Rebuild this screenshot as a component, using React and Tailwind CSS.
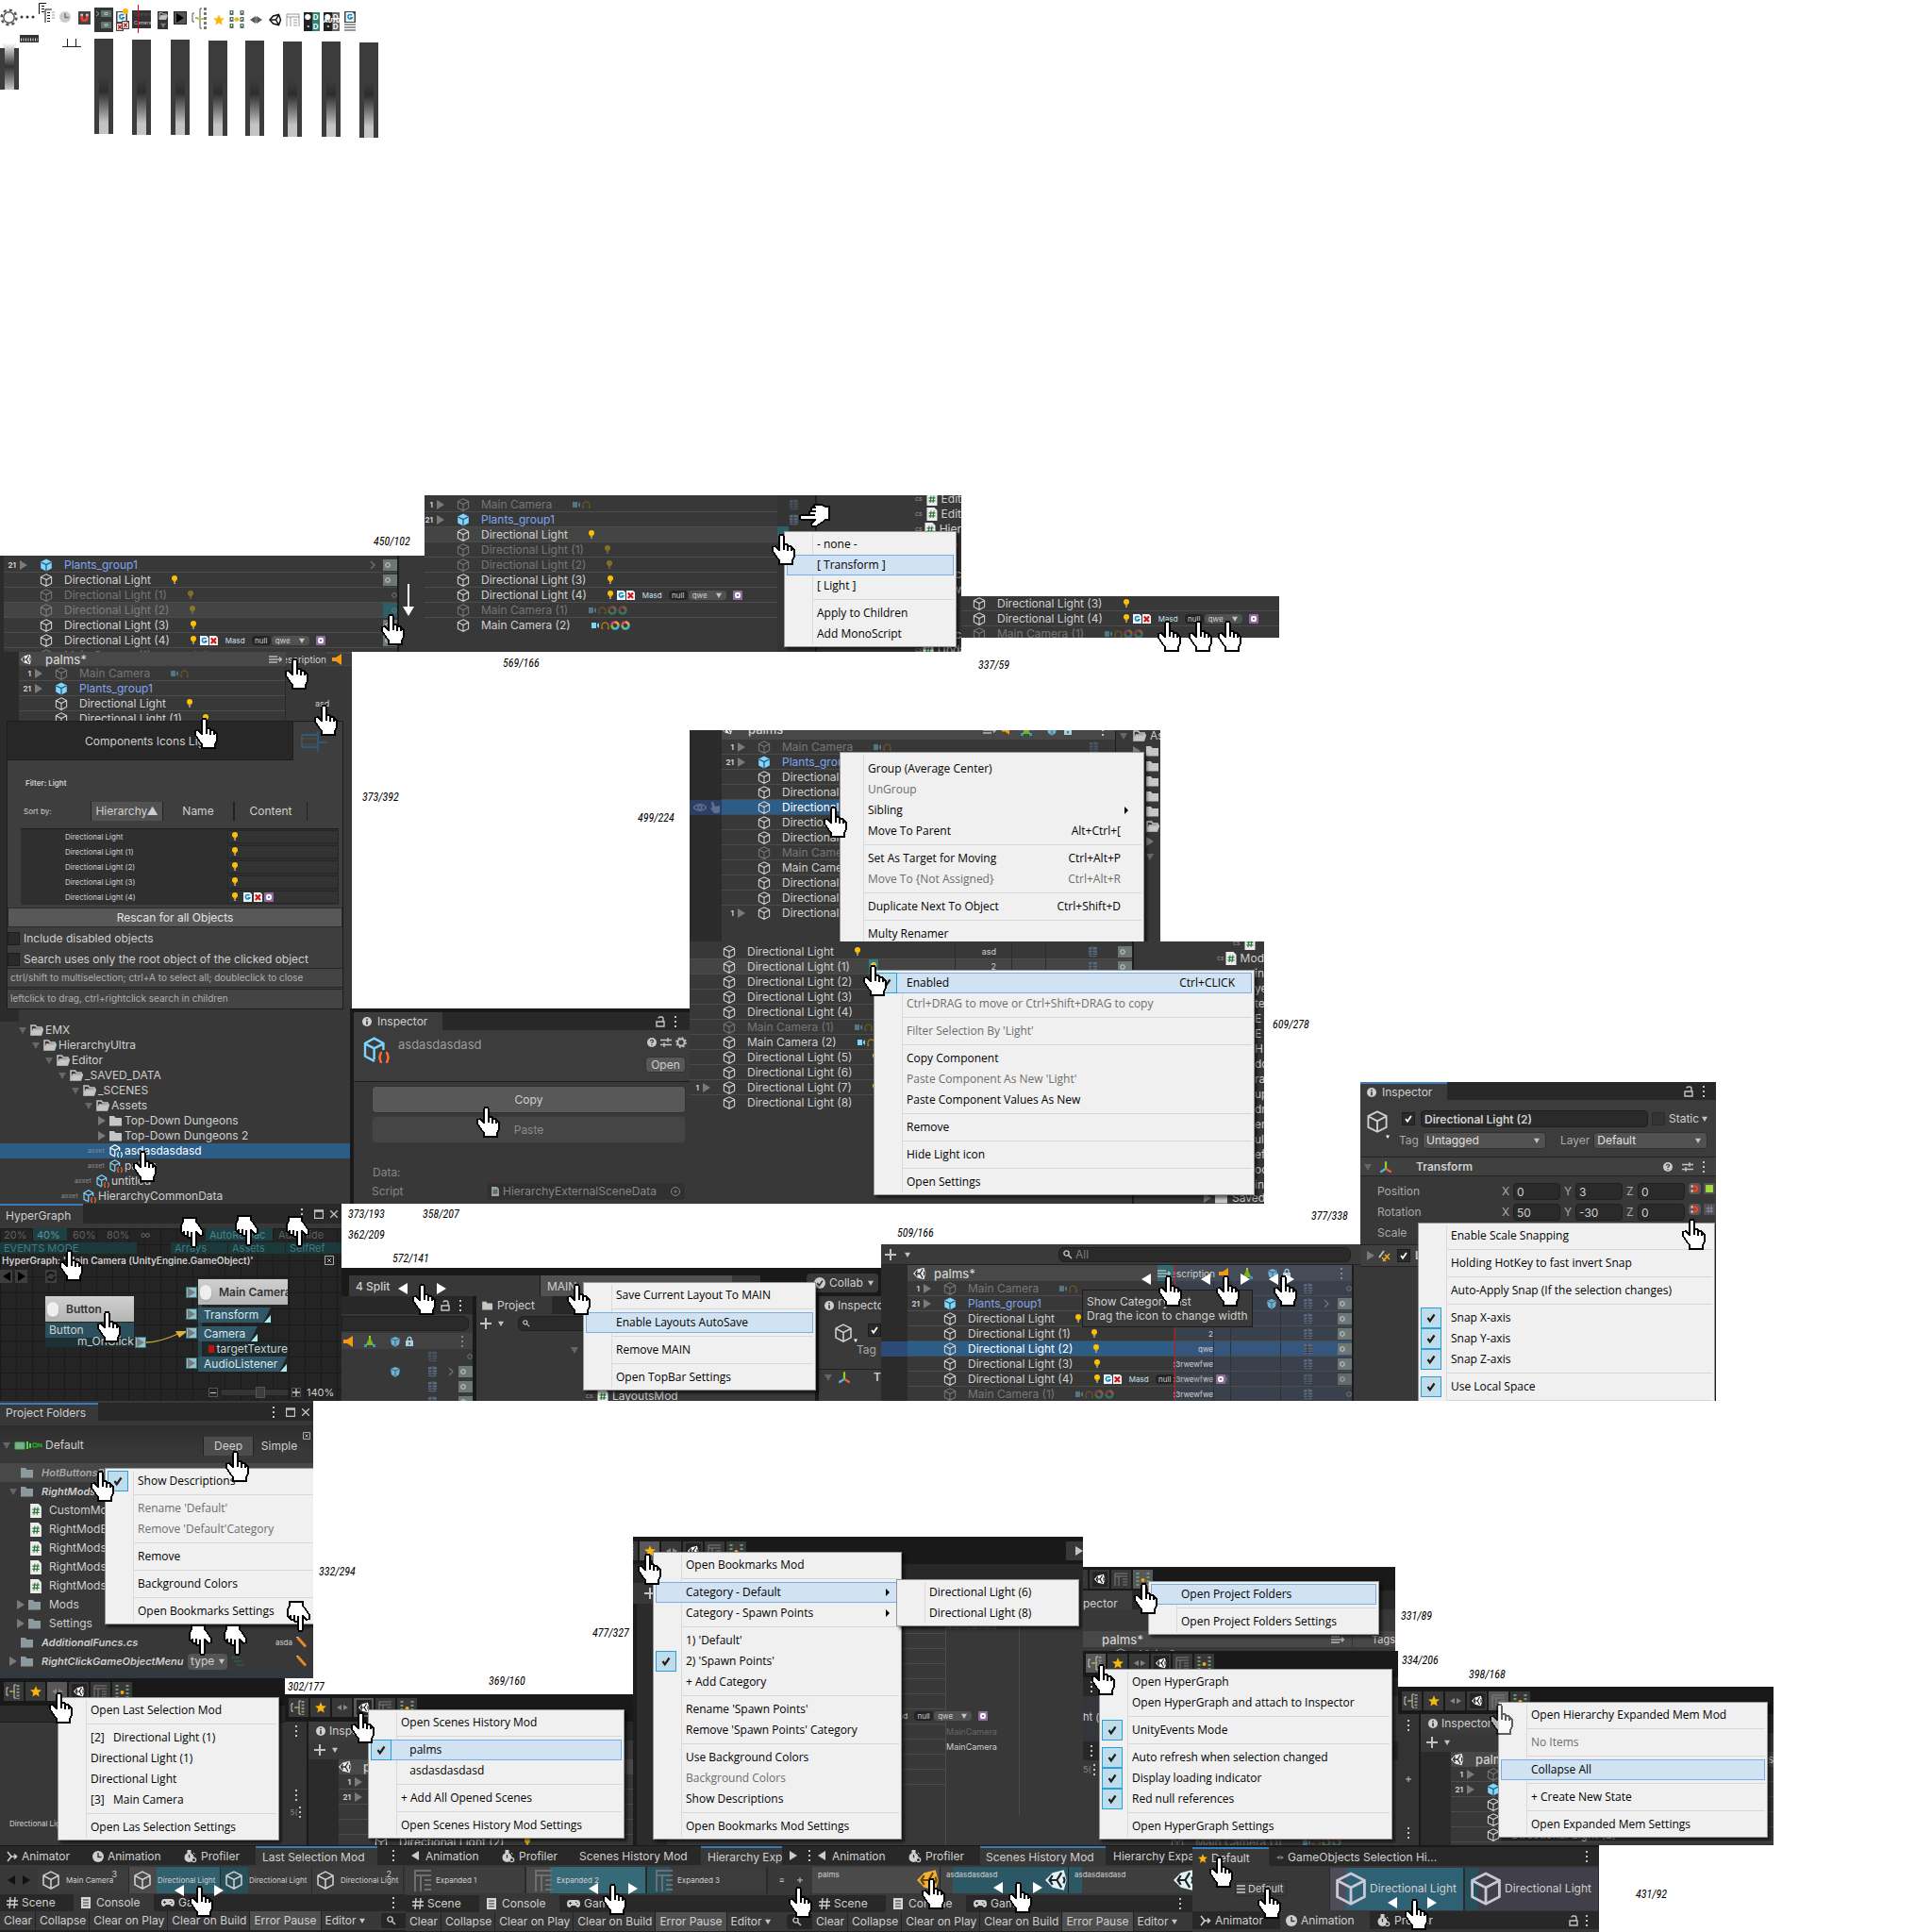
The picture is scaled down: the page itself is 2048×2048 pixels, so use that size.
import React from "react";

/* ---------- glyphs ---------- */

const Cube = ({ c = "h-3.5 w-3.5", solid }) =>
  solid ? (
    <svg viewBox="0 0 14 14" className={`shrink-0 ${c}`}>
      <path d="M7 .6 12.8 3.4V10.6L7 13.6 1.2 10.6V3.4Z" fill="#7fd6fd" />
      <path d="M1.6 4 7 6.6 12.4 4M7 6.6V13.4" fill="none" stroke="#26516b" strokeWidth="1.2" />
    </svg>
  ) : (
    <svg viewBox="0 0 14 14" className={`shrink-0 ${c}`} fill="none" stroke="currentColor" strokeWidth="1.1">
      <path d="M7 .8 12.6 3.6V10.4L7 13.3 1.4 10.4V3.6ZM1.6 3.8 7 6.6 12.4 3.8M7 6.6V13" />
    </svg>
  );

const Tri = ({ c = "" }) => (
  <svg viewBox="0 0 8 10" className={`h-2.5 w-2 shrink-0 fill-[#7a7a7a] ${c}`}>
    <path d="M0 0 8 5 0 10Z" />
  </svg>
);
const TriDown = ({ c = "h-2 w-2 fill-[#666]" }) => (
  <svg viewBox="0 0 8 8" className={`shrink-0 ${c}`}>
    <path d="M0 1H8L4 8Z" />
  </svg>
);
const Dots = ({ c = "" }) => (
  <svg viewBox="0 0 2 12" className={`h-3 w-0.5 shrink-0 fill-[#c4c4c4] ${c}`}>
    <path d="M0 0h2v2H0zM0 5h2v2H0zM0 10h2v2H0z" />
  </svg>
);
const Lock = ({ c = "" }) => (
  <svg viewBox="0 0 10 12" className={`h-3 w-2.5 shrink-0 ${c}`} fill="none" stroke="#c4c4c4" strokeWidth="1.4">
    <path d="M1 6H9V11H1ZM3 2.5Q3 1 5 1H6Q8 1 8 3V6" />
  </svg>
);
const Bulb = ({ c = "" }) => (
  <svg viewBox="0 0 6 10" className={`h-2.5 w-1.5 shrink-0 ${c}`}>
    <circle cx="3" cy="3" r="3" fill="#fbc007" />
    <path d="M1.8 5.5h2.4V7H1.8z" fill="#e2a800" />
    <path d="M2 7.3h2v1.8H2z" fill="#9a9a9a" />
  </svg>
);
const CamPhones = ({ rings }) => (
  <svg viewBox="0 0 42 10" className="h-2.5 w-[42px] shrink-0">
    <path d="M0 2h5v6H0zM6 4l2-2v6L6 6z" fill="#7fd6fd" />
    <path d="M11 9V5.500a3.500 3.500 0 0 1 7 0V9M11.500 7v2M17.500 7v2" fill="none" stroke="#a97a10" strokeWidth="1.4" />
    {rings && (
      <g fill="none" strokeWidth="2.6">
        <path d="M25 1.500a3.500 3.500 0 0 1 3.500 3.500M36 1.500a3.500 3.500 0 0 1 3.500 3.500" stroke="#e8a33a" />
        <path d="M28.500 5a3.500 3.500 0 0 1-3.500 3.500M39.500 5a3.500 3.500 0 0 1-3.500 3.500" stroke="#36b6e0" />
        <path d="M25 8.500a3.500 3.500 0 0 1-3.500-3.500M36 8.500a3.500 3.500 0 0 1-3.500-3.500" stroke="#5cc85c" />
        <path d="M21.500 5a3.500 3.500 0 0 1 3.500-3.500M32.500 5a3.500 3.500 0 0 1 3.500-3.500" stroke="#e5456e" />
      </g>
    )}
  </svg>
);
const PageG = ({ c = "h-2.5 w-[9px]" }) => (
  <svg viewBox="0 0 9 10" className={`shrink-0 ${c}`}>
    <path d="M0 0H7L9 2V10H0Z" fill="#e9f4fb" />
    <path d="M6.500 3.300A2.300 2.300 0 1 0 6.700 5.800H4.800" fill="none" stroke="#1b80b8" strokeWidth="1.5" />
  </svg>
);
const PageX = ({ c = "h-2.5 w-[9px]" }) => (
  <svg viewBox="0 0 9 10" className={`shrink-0 ${c}`}>
    <path d="M0 0H7L9 2V10H0Z" fill="#f4f4f4" />
    <path d="M1.800 2.500 7 8M7 2.500 1.800 8" stroke="#d31414" strokeWidth="2.2" />
  </svg>
);
const Purple = ({ c = "" }) => (
  <svg viewBox="0 0 10 10" className={`h-2.5 w-2.5 shrink-0 ${c}`}>
    <rect width="10" height="10" rx="1" fill="#8d6c9e" />
    <rect x="3" y="3" width="4" height="4" rx="1" fill="none" stroke="#fff" strokeWidth="1.8" />
  </svg>
);
const CsPage = ({ c = "h-3.5 w-[11px]" }) => (
  <svg viewBox="0 0 11 14" className={`shrink-0 ${c}`}>
    <path d="M0 0H8L11 3V14H0Z" fill="#ececec" />
    <path d="M4.500 3.500 3.500 11M7.500 3.500 6.500 11M2 5.800H9M2 8.800H9" stroke="#2c7a3b" strokeWidth="1.2" />
  </svg>
);
const Folder = ({ open, c = "h-3 w-3.5", tint = "#c6c6c6" }) => (
  <svg viewBox="0 0 14 12" className={`shrink-0 ${c}`}>
    {open ? (
      <path d="M1 11V1H5.500L7 3H12V5M1 11 3.500 5H13.500L11.500 11Z" fill="none" stroke={tint} strokeWidth="1.500" />
    ) : (
      <path d="M0 1H5L6.500 3H13V11.500H0Z" fill={tint} />
    )}
    {open && <path d="M1.500 11 3.800 5.500H13L11 11Z" fill={tint} />}
  </svg>
);
const Unity = ({ c = "h-3.5 w-3.5", fill = "#e8e8e8", ink = "#2a2a2a" }) => (
  <svg viewBox="0 0 14 14" className={`shrink-0 ${c}`}>
    <path d="M0 7 4.500 2.500 11.500 .8 13.200 7 11.500 13.200 4.500 11.500Z" fill={fill} />
    <path d="M2.600 7H7.200M7.200 7 10 2.400M7.200 7 10 11.600M4.500 9.800 2.600 7 4.500 4.200M11.300 5 12 7 11.300 9" fill="none" stroke={ink} strokeWidth="1.300" />
  </svg>
);
const Info = ({ c = "h-2.5 w-2.5" }) => (
  <svg viewBox="0 0 10 10" className={`shrink-0 ${c}`}>
    <circle cx="5" cy="5" r="5" fill="#d0d0d0" />
    <path d="M4.200 1.800h1.600v1.500H4.200zM4.200 4.200h1.600v4H4.200z" fill="#333" />
  </svg>
);
const AssetCube = ({ c = "h-3.5 w-3.5", line = "#7fd6fd", brace = "#ff6a3d" }) => (
  <svg viewBox="0 0 14 14" className={`shrink-0 ${c}`} fill="none" strokeWidth="1.200">
    <path d="M6 13 1 10.300V3.500L5.800 .8 10.700 3.500V7M1 3.700 5.800 6.200 10.700 3.700M5.800 6.200V12" stroke={line} />
    <path d="M10 8.500q-1 0-1 1.200t-.8 1.300q.8.100.8 1.300T10 13.500M12 8.500q1 0 1 1.200t.8 1.300q-.8.100-.8 1.300t-1 1.200" stroke={brace} />
  </svg>
);
const Axis = ({ c = "h-3.5 w-3.5" }) => (
  <svg viewBox="0 0 14 14" className={`shrink-0 ${c}`} fill="none" strokeWidth="2.200" strokeLinecap="round">
    <path d="M7 2V8" stroke="#8fd320" />
    <path d="M6 9.500 2 12" stroke="#4bb8ea" />
    <path d="M8 9.500 12 12" stroke="#f0603c" />
  </svg>
);
const Triad = ({ c = "h-3 w-3" }) => (
  <svg viewBox="0 0 12 12" className={`shrink-0 ${c}`}>
    <path d="M6 1 10.500 10H1.500Z" fill="#7fae1f" />
    <path d="M0 9h3v3H0zM9 9h3v3H9z" fill="#2f9fc4" />
    <path d="M5 0h2v3H5z" fill="#9ed32b" />
  </svg>
);
const Horn = ({ c = "h-3 w-2.5" }) => (
  <svg viewBox="0 0 10 12" className={`shrink-0 ${c}`}>
    <path d="M0 4H4L10 0V12L4 8H0Z" fill="#f39a12" />
  </svg>
);
const BlueBox = ({ c = "h-3 w-2.5" }) => (
  <svg viewBox="0 0 10 12" className={`shrink-0 ${c}`}>
    <path d="M5 1 10 3 9 9 5 12 1 9 0 3Z" fill="#6fb1cf" />
    <path d="M0 3 5 5 10 3M5 5V12" stroke="#37647a" fill="none" />
  </svg>
);
const Padlock = ({ c = "h-3 w-2" }) => (
  <svg viewBox="0 0 8 12" className={`shrink-0 ${c}`}>
    <path d="M2 6V3.500a2 2 0 0 1 4 0V6" stroke="#a7cfdc" strokeWidth="1.300" fill="none" />
    <path d="M0 5H8V11H0Z" fill="#a7cfdc" />
    <path d="M3.300 7h1.400v2.500H3.300z" fill="#305060" />
  </svg>
);
const Lines = ({ c = "h-2.5 w-3.5" }) => (
  <svg viewBox="0 0 14 10" className={`shrink-0 ${c}`} fill="none" stroke="#b8b8b8" strokeWidth="1.300">
    <path d="M0 2H9M0 5H13M0 8H9M11 2.500 13.500 5 11 7.500" />
  </svg>
);
const Db = ({ c = "" }) => (
  <svg viewBox="0 0 9 12" className={`h-3 w-[9px] shrink-0 ${c}`}>
    <path d="M0 1.500Q4.500-.5 9 1.500V10.500Q4.500 12.500 0 10.500Z" fill="#5d6b7c" />
    <path d="M0 4H9M0 7H9M0 9.500H9M4 0V12" stroke="#323b45" strokeWidth="1" />
  </svg>
);
const Loupe = ({ c = "h-2.5 w-2.5" }) => (
  <svg viewBox="0 0 10 10" className={`shrink-0 ${c}`} fill="none" stroke="#c4c4c4" strokeWidth="1.400">
    <circle cx="3.500" cy="3.500" r="2.600" />
    <path d="M5.500 5.500 9 9" />
  </svg>
);
const Plus = ({ c = "h-3 w-3" }) => (
  <svg viewBox="0 0 12 12" className={`shrink-0 ${c}`}>
    <path d="M5 0h2v5h5v2H7v5H5V7H0V5h5z" fill="#c4c4c4" />
  </svg>
);
const Star = ({ c = "h-3 w-3" }) => (
  <svg viewBox="0 0 12 12" className={`shrink-0 ${c}`}>
    <path d="M6 .3 7.700 4.200 12 4.500 8.700 7.300 9.700 11.600 6 9.300 2.300 11.600 3.300 7.300 0 4.500 4.300 4.200Z" fill="#f9b70c" />
  </svg>
);
const Tick = ({ c = "h-3 w-3", ink = "#1d1d1d" }) => (
  <svg viewBox="0 0 12 12" className={`shrink-0 ${c}`}>
    <path d="M2.500 6 4.800 9.300 9.500 2.500" fill="none" stroke={ink} strokeWidth="2.200" />
  </svg>
);
const Magnet = ({ c = "h-3.5 w-3.5" }) => (
  <svg viewBox="0 0 14 14" className={`shrink-0 ${c}`}>
    <path d="M4 4V7a3 3 0 0 0 6 0V4" fill="none" stroke="#f0422a" strokeWidth="2.800" />
    <path d="M2.600 2.500h2.800v2H2.600zM8.600 2.500h2.800v2H8.600z" fill="#d8d8d8" />
  </svg>
);
const Clock = () => (
  <svg viewBox="0 0 12 12" className="h-3 w-3 shrink-0">
    <circle cx="6" cy="6" r="6" fill="#cfcfcf" />
    <path d="M6 2V6.500H9.500" fill="none" stroke="#333" strokeWidth="1.400" />
  </svg>
);
const Stopwatch = () => (
  <svg viewBox="0 0 14 14" className="h-3.5 w-3.5 shrink-0">
    <circle cx="5.500" cy="8" r="5" fill="#cfcfcf" />
    <path d="M4 0h3v3H4zM10 3l1.500 1.500" fill="#cfcfcf" stroke="#cfcfcf" />
    <path d="M5.500 5V8.500" stroke="#333" strokeWidth="1.300" />
    <circle cx="10.500" cy="10.500" r="2.200" fill="#333" stroke="#cfcfcf" strokeWidth="1.200" />
  </svg>
);
const Runner = () => (
  <svg viewBox="0 0 12 12" className="h-3 w-3 shrink-0" fill="none" stroke="#cfcfcf" strokeWidth="1.600">
    <path d="M1 1 5 6 1 11M5 6H10M8 3.500 10.500 6 8 8.500" />
  </svg>
);
const HashIcon = () => (
  <svg viewBox="0 0 12 12" className="h-3 w-3 shrink-0" stroke="#cfcfcf" strokeWidth="1.400">
    <path d="M4 0 3 12M9 0 8 12M0 4H12M0 8H12" />
  </svg>
);
const DocIcon = () => (
  <svg viewBox="0 0 10 12" className="h-3 w-2.5 shrink-0">
    <path d="M0 0H10V12H0Z" fill="#d6d6d6" />
    <path d="M2 3H8M2 6H8M2 9H8" stroke="#333" />
  </svg>
);
const Pad = () => (
  <svg viewBox="0 0 14 10" className="h-2.5 w-3.5 shrink-0">
    <path d="M3.500 1H10.500Q14 1 14 5T11 9L9 7H5L3 9Q0 9 0 5T3.500 1Z" fill="#cfcfcf" />
    <path d="M2 4.500h3M3.500 3v3M9 3.500h1.500M10.500 5.500H12" stroke="#333" />
  </svg>
);
const Help = () => (
  <svg viewBox="0 0 10 10" className="h-2.5 w-2.5 shrink-0">
    <circle cx="5" cy="5" r="5" fill="#c8c8c8" />
    <path d="M3.500 3.800Q3.500 2.300 5 2.300T6.500 3.700Q6.500 4.800 5 5V6M5 7v1.200" fill="none" stroke="#333" strokeWidth="1.100" />
  </svg>
);
const Sliders = () => (
  <svg viewBox="0 0 12 12" className="h-3 w-3 shrink-0" stroke="#c4c4c4" strokeWidth="1.300">
    <path d="M0 3.500H12M0 8.500H12M8 1V6M4 6V11" />
  </svg>
);
const Gear = ({ c = "h-3 w-3", ink = "#c4c4c4", w = "3" }) => (
  <svg viewBox="0 0 20 20" className={`shrink-0 ${c}`} fill="none" stroke={ink}>
    <circle cx="10" cy="10" r="6" strokeWidth={w} />
    <circle cx="10" cy="10" r="8.300" strokeWidth="2.600" strokeDasharray="3.300 3.220" />
  </svg>
);
const WinBtns = () => (
  <span className="ml-auto flex items-center pr-1">
    <Dots />
    <svg viewBox="0 0 10 10" className="ml-3 h-2.5 w-2.5" fill="none" stroke="#c4c4c4"><path d="M.5 1H9.500V9.500H.5ZM.5 2H9.500" strokeWidth="1.300" /></svg>
    <svg viewBox="0 0 8 8" className="ml-[7px] h-2 w-2" stroke="#c4c4c4" strokeWidth="1.300"><path d="M0 0 8 8M8 0 0 8" /></svg>
  </span>
);

/* Pointer artwork; the fingertip is about 11px in from the left edge */
const Hand = ({ at }) => (
  <svg viewBox="0 0 25 33" className={`pointer-events-none absolute z-20 h-[33px] w-[25px] ${at}`} shapeRendering="crispEdges">
    <path d="M9 1H12L13 3V11L16 11 18 13 20 13 22 15 24 17V24L22 28V32H8V28L5 24 1 18V14L4 13 7 16 8 18V3Z" fill="#fff" stroke="#000" strokeWidth="1.600" />
    <path d="M13 11V17M17 13V18M21 15V18" stroke="#000" strokeWidth="1.300" fill="none" />
  </svg>
);
const Arrow = ({ at, left }) => (
  <svg viewBox="0 0 10 12" className={`absolute z-20 h-3 w-2.5 fill-white ${at}`}>
    <path d={left ? "M10 0V12L0 6Z" : "M0 0V12L10 6Z"} />
  </svg>
);

/* ---------- shared blocks ---------- */

const Sprite = ({ at, name, children, bg = "bg-[#383838]" }) => (
  <section aria-label={name} className={`absolute overflow-hidden text-xs leading-4 whitespace-nowrap text-[#cfcfcf] ${bg} ${at}`}>
    {children}
  </section>
);

function Menu({ at, items, tight }) {
  return (
    <div role="menu" className={`absolute z-10 border border-[#979797] bg-[#f0f0f0] px-0.5 pb-0.5 font-['Open_Sans','Noto_Sans',sans-serif] text-black shadow-[3px_3px_3px_rgba(0,0,0,0.55)] ${tight ? "pt-1.5" : "pt-0.5"} ${at}`}>
      <i className={`absolute inset-y-0.5 w-px bg-[#dadada] ${tight ? "left-6" : "left-[29px]"}`} />
      {items.map((it, i) =>
        it === "-" ? (
          <div key={i} className={`flex h-[7px] items-center ${tight ? "pl-[22px]" : "pl-7"}`}><hr className="w-full border-[#d7d7d7]" /></div>
        ) : (
          <button key={i} role="menuitem" className={`relative flex h-[22px] w-full items-center text-left ${tight ? "pr-[22px]" : "pr-[18px]"} ${it.hi ? "bg-[#d1e2f2] ring-1 ring-[#78aee5] ring-inset" : ""} ${it.dim ? "text-[#6d6d6d]" : ""}`}>
            <span className={`flex h-[22px] w-[22px] shrink-0 items-center justify-center ${it.check ? "border border-[#26a0da] bg-[#bfdcea]" : ""}`}>
              {it.check && <Tick />}
            </span>
            <span className={`whitespace-pre ${tight ? "ml-[5px]" : "ml-2.5"}`}>{it.t}</span>
            {it.k && <span className="ml-auto">{it.k}</span>}
            {it.sub && <svg viewBox="0 0 4 8" className={`absolute h-2 w-1 ${tight ? "right-3.5" : "right-2.5"}`}><path d="M0 0 4 4 0 8Z" /></svg>}
          </button>
        )
      )}
    </div>
  );
}
const m = (t, o) => ({ t, ...o });

function Row({ n, name, blue, dim, cls = "", icons, end, bright }) {
  return (
    <div className={`flex h-4 shrink-0 items-center border-b border-[#4c4c4c] ${cls}`}>
      <span className="flex w-2 shrink-0 justify-end text-[8px] font-bold">{n}</span>
      <Tri c={n ? "ml-1" : "invisible ml-1"} />
      <span className={`flex items-center ${dim ? "opacity-40" : ""}`}>
        <Cube c="ml-[13px] h-3.5 w-3.5" solid={blue} />
        <span className={`ml-3 ${blue ? "text-[#7fa6ef]" : bright ? "text-white" : ""}`}>{name}</span>
        {icons && <span className="ml-[22px] flex items-center">{icons}</span>}
      </span>
      {end && <span className="ml-auto flex h-4 items-center">{end}</span>}
    </div>
  );
}
const NullQwe = () => (
  <>
    <span className="ml-[7px] flex h-2.5 w-5 items-center justify-center rounded-sm bg-[#242424] text-[8px]">null</span>
    <span className="ml-px flex h-2.5 w-10 items-center justify-between rounded-sm bg-[#515151] px-1 text-[8px]">qwe<TriDown c="h-1.5 w-2 fill-[#c4c4c4]" /></span>
    <Purple c="ml-[7px]" />
  </>
);
const LightFour = () => (
  <>
    <Bulb />
    <PageG c="ml-1 h-2.5 w-[9px]" />
    <PageX c="ml-px h-2.5 w-[9px]" />
    <span className="ml-2 text-[8px] text-[#c7e2e8]">Masd</span>
    <NullQwe />
  </>
);
const Toggle = ({ off, teal }) => (
  <span className={`flex w-[15px] items-center pl-0.5 ${teal ? "h-4 bg-[#2e5f68]" : off ? "h-3" : "h-3 bg-[#6d7876]"} ${off ? "justify-end" : ""}`}>
    <svg viewBox="0 0 6 6" className="h-1.5 w-1.5" fill="none" stroke={off ? "#777" : "#cfd6d4"}><circle cx="3" cy="3" r="2.300" /></svg>
  </span>
);
const Chevron = ({ c = "" }) => (
  <svg viewBox="0 0 6 8" className={`h-2 w-1.5 shrink-0 ${c}`} fill="none" stroke="#777" strokeWidth="1.200"><path d="M1 0 5 4 1 8" /></svg>
);

const toolIcons = [
  <svg key="a" viewBox="0 0 17 17" className="h-[17px] w-[17px]" fill="none" stroke="#c9c9c9"><path d="M3 4H1V12H3M4 8H7M11 1H9V15H11" /><path d="M6 8H10" stroke="#b8c832" /><path d="M13 1V16" strokeDasharray="2 1.500" strokeWidth="3" stroke="#8a938a" /></svg>,
  <Star key="b" />,
  <svg key="c" viewBox="0 0 12 8" className="h-2 w-3 fill-[#858585]"><path d="M0 4 5 1V7ZM12 4 7 1V7Z" /></svg>,
  <span key="d" className="flex h-4 w-4 items-center justify-center bg-[#242424]"><Unity c="h-3 w-3" fill="#fff" ink="#111" /></span>,
  <svg key="e" viewBox="0 0 15 15" className="h-[15px] w-[15px]" fill="none" stroke="#7d7d7d"><path d="M1 14V1H14M1 4H14M5 4V14M9 7H14M9 10H14M9 13H14" /></svg>,
  <svg key="f" viewBox="0 0 17 17" className="h-[17px] w-[17px]"><path d="M3 1V16M14 1V16" stroke="#6f9a74" strokeWidth="3" strokeDasharray="2 2" /><circle cx="8.500" cy="9" r="2" fill="#f9a70c" /></svg>,
];
const Tools = ({ on, c }) => (
  <div className={`flex gap-0.5 ${c}`}>
    {toolIcons.map((ic, i) => (
      <button key={i} aria-label={`Tool ${i + 1}`} className={`flex h-5 w-[21px] shrink-0 items-center justify-center ${i === on ? "bg-[#585858]" : "bg-[#383838]"}`}>{ic}</button>
    ))}
  </div>
);

const FoldRow = ({ lvl, name, open, leaf, sel }) => {
  const pads = ["pl-4", "pl-[30px]", "pl-[44px]", "pl-[58px]", "pl-[72px]", "pl-[86px]", "pl-[100px]"];
  const leafPads = { 6: "pl-[93px]", 5: "pl-[79px]", 4: "pl-[65px]" };
  return leaf ? (
    <div className={`flex h-4 items-center ${leafPads[lvl]} ${sel ? "bg-[#2c5d87] text-white" : ""}`}>
      <span className="w-[23px] text-[7px] text-[#8a8a8a]">asset</span>
      {sel ? <AssetCube line="#fff" brace="#fff" /> : <AssetCube />}
      <span className="ml-0.5">{name}</span>
    </div>
  ) : (
    <div className={`flex h-4 items-center ${pads[lvl]}`}>
      <span className="flex w-4 justify-center">{open ? <TriDown /> : <Tri c="h-2 w-1.5" />}</span>
      <Folder open={open} />
      <span className="ml-0.5">{name}</span>
    </div>
  );
};

const ConsoleBars = ({ c = "" }) => (
  <div className={`bg-[#282828] ${c}`}>
    <div className="flex h-[18px] items-center">
      <span className="flex w-[78px] items-center gap-1 pl-[7px]"><HashIcon />Scene</span>
      <span className="flex h-full w-[85px] items-center gap-1.5 bg-[#383838] pl-2"><DocIcon />Console</span>
      <span className="flex items-center gap-1 pl-2"><Pad />Game</span>
      <Dots c="mr-3 ml-auto" />
    </div>
    <div className="flex h-5 items-stretch bg-[#383838]">
      {["Clear", "Collapse", "Clear on Play", "Clear on Build"].map((t) => (
        <button key={t} className="shrink-0 border-r border-[#222] pr-[3px] pl-1">{t}</button>
      ))}
      <button className="shrink-0 border-r border-[#222] bg-[#4f4f4f] px-1">Error Pause</button>
      <button className="flex shrink-0 items-center gap-0.5 pr-4 pl-1">Editor<TriDown c="h-1.5 w-2 fill-[#c4c4c4]" /></button>
      <span className="my-0.5 flex flex-1 items-center rounded-l bg-[#262626] pl-1.5"><Loupe /></span>
    </div>
    <div className="h-1 bg-[#202020]" />
  </div>
);

const sep = "-";

/* ---------- top strip of small sprites ---------- */

const IconStrip = () => (
  <div aria-label="Icons">
    <Gear c="absolute left-0 top-[9px] h-[19px] w-[19px]" ink="#555" w="1.500" />
    <svg viewBox="0 0 16 4" className="absolute top-4 left-[21px] h-1 w-4 fill-[#333]"><circle cx="2" cy="2" r="1.500" /><circle cx="8" cy="2" r="1.500" /><circle cx="14" cy="2" r="1.500" /></svg>
    <svg viewBox="0 0 17 24" className="absolute top-[3px] left-[41px] h-6 w-[17px]" fill="none" stroke="#111"><path d="M.5 12V.5H8M3 3.500H6M3 6.500H6M3 9.500H6M7 21V7H14M9 10.500H12M9 13.500H12M9 16.500H12M9 19.500H12" /><path d="M14 10h3M14 13h3M14 16h3" stroke="#999" /></svg>
    <svg viewBox="0 0 12 12" className="absolute top-3 left-[63px] h-3 w-3"><circle cx="6" cy="6" r="6" fill="#ccc" /><path d="M6 2V6.500H10" fill="none" stroke="#777" strokeWidth="1.500" /></svg>
    <span className="absolute top-3 left-[83px] bg-[#444]"><Magnet c="h-3.5 w-[13px]" /></span>
    <svg viewBox="0 0 20 26" className="absolute top-2 left-[100px] h-[26px] w-5"><path d="M0 0H20V26H0Z" fill="#353535" /><path d="M7 3h11v7H7zM7 15h11v7H7z" fill="#607572" /><path d="M2 4 5 6.500 2 9M11 5.500h3v2h-3zM11 17.500h3v2h-3z" stroke="#ccc" fill="none" strokeWidth=".8" /></svg>
    <PageG c="absolute left-[123px] top-[12px] h-3 w-3 border border-[#444] bg-[#444]" />
    <PageX c="absolute left-[123px] top-[24px] h-[9px] w-2 border border-[#444] bg-[#444]" />
    <PageX c="absolute left-[129px] top-[22px] h-[9px] w-2 border border-[#444] bg-[#444]" />
    <svg viewBox="0 0 6 6" className="absolute top-[9px] left-[130px] h-1.5 w-1.5 fill-[#fbb707]"><circle cx="3" cy="3" r="3" /></svg>
    <div className="absolute top-[11px] left-[140px] h-[19px] w-5 overflow-hidden bg-[#333] pl-0.5 text-[5px] leading-[9px] text-[#ccc]"><p className="text-[#555]">Camera</p><p>Camera</p></div>
    <i className="absolute top-[5px] left-[146px] h-[30px] w-px bg-red-600" />
    <div className="absolute top-3 left-[167px] flex h-[19px] w-[11px] flex-col items-center justify-around bg-[#333]"><Folder open c="h-2 w-2.5" /><TriDown c="h-1.5 w-2 fill-[#777]" /></div>
    <div className="absolute top-3 left-[184px] flex h-3.5 w-3.5 items-center justify-center border border-[#222] bg-[#555]"><Tri c="fill-black" /></div>
    <svg viewBox="0 0 17 23" className="absolute top-2 left-[203px] h-[23px] w-[17px]" fill="none" stroke="#555"><path d="M3 6H1V15H3M4 11H7M11 1H9V22H11" /><path d="M6 12H15" stroke="#c3cf36" strokeWidth="2" /><path d="M14.500 0V23" strokeDasharray="3 2" strokeWidth="3" stroke="#777" /></svg>
    <Star c="absolute left-[226px] top-[15px] h-3 w-3" />
    <svg viewBox="0 0 16 19" className="absolute top-[11px] left-[243px] h-[19px] w-4"><path d="M2.500 0V19M13.500 0V19" stroke="#53725a" strokeWidth="4" strokeDasharray="5 2" /><path d="M2.500 1V19M13.500 1V19" stroke="#fff" strokeDasharray="2 5" /><path d="M3 9.500H13" stroke="#bbb" /><circle cx="8" cy="9.500" r="2.200" fill="#f2b41b" /></svg>
    <svg viewBox="0 0 13 8" className="absolute top-[17px] left-[265px] h-2 w-[13px]"><path d="M0 4 6 0V8ZM13 4 7 0V8Z" fill="#555" /><path d="M5 1h3v6H5z" fill="#777" /></svg>
    <svg viewBox="0 0 14 14" className="absolute top-[14px] left-[285px] h-3.5 w-3.5" fill="none" stroke="#111" strokeWidth="1.500"><path d="M1 7 4.500 3 10.500 1.500 12.500 7 10.500 12.500 4.500 11ZM2.500 7H7.500L10 2.500M7.500 7 10 11.500" /></svg>
    <svg viewBox="0 0 15 14" className="absolute top-3.5 left-[303px] h-3.5 w-[15px]" fill="none" stroke="#999"><path d="M1 14V1H14V14M1 4H14M5 4V14M8 7H12M8 10H12M8 13H12" /></svg>
    {[["left-[322px]", "bg-[#2b8577]"], ["left-[343px]", "bg-[#666]"]].map(([l, g], i) => (
      <div key={l} className={`absolute top-[13px] grid h-5 w-[17px] grid-cols-2 text-center text-[8px] leading-[10px] font-bold text-white ${l}`}>
        <span className="bg-[#222]">●</span><span className={g}>D</span><span className="bg-[#222]">◔</span><span className={g}>D</span>
        {i === 1 && <b className="absolute inset-x-0 top-1 text-[6px] italic">AUTO</b>}
      </div>
    ))}
    <PageG c="absolute left-[365px] top-[12px] h-3 w-3 border border-[#444] bg-[#444]" />
    <svg viewBox="0 0 12 8" className="absolute top-[25px] left-[365px] h-2 w-3" stroke="#333"><path d="M0 1H12M0 4H12M0 7H12" /></svg>

    <svg viewBox="0 0 20 8" className="absolute top-[37px] left-[21px] h-2 w-5"><path d="M0 0H20V8H0Z" fill="#333" /><path d="M1 5H19" stroke="#d8e4d0" strokeWidth="3" strokeDasharray="1 1.500" /></svg>
    <svg viewBox="0 0 20 9" className="absolute top-[41px] left-[66px] h-[9px] w-5" fill="none" stroke="#222"><path d="M0 8.500H20M5.500 0V8M14.500 0V8" /></svg>
    <div className="absolute top-[51px] left-0 h-11 w-5 bg-[#3c3c3c]" />
    <div className="absolute top-[46px] left-[3px] h-[5px] w-3.5 bg-[#ececec]" />
    <div className="absolute top-[46px] left-[5px] h-[49px] w-2.5 bg-linear-to-b from-white via-[#333] to-[#c8c8c8]" />
    {["left-[100px] top-[41px]", "left-[140px] top-[42px]", "left-[181px] top-[42px]", "left-[221px] top-[43px]", "left-[260px] top-[43px]", "left-[300px] top-[44px]", "left-[341px] top-[44px]", "left-[381px] top-[45px]"].map((p) => (
      <div key={p} className={`absolute flex h-[101px] w-5 items-end justify-center bg-[#3c3c3c] ${p}`}>
        <div className="h-[60px] w-2.5 bg-linear-to-b from-[#3c3c3c] via-[#2d2d2d] via-25% to-[#c4c4c4] to-80%" />
      </div>
    ))}
  </div>
);

const Tag = ({ at, children }) => (
  <span className={`absolute font-['Liberation_Sans_Narrow','Roboto_Condensed','Liberation_Sans',sans-serif] text-xs leading-3.5 text-black italic ${at}`}>{children}</span>
);

/* ---------- sprites ---------- */

const DL = "Directional Light";

const SpriteA = () => (
  <Sprite name="Hierarchy toggles" at="left-0 top-[589px] h-[102px] w-[450px]">
    <div className="flex h-full">
      <div className="w-1 bg-[#2b2b2b]" />
      <div className="relative w-[417px] pt-0.5">
        {[
          { n: "21", name: "Plants_group1", blue: 1, end: <><Chevron c="mr-2" /><Toggle /></> },
          { name: DL, icons: <Bulb />, end: <Toggle /> },
          { name: DL + " (1)", dim: 1, icons: <Bulb />, end: <Toggle off /> },
          { name: DL + " (2)", dim: 1, icons: <Bulb />, cls: "bg-[#444]", end: <Toggle off teal /> },
          { name: DL + " (3)", icons: <Bulb />, end: <Toggle /> },
          { name: DL + " (4)", icons: <LightFour />, end: <Toggle /> },
          { name: "Main Camera (1)", dim: 1, icons: <CamPhones rings /> },
        ].map((r) => <Row key={r.name} {...r} cls={`pl-[5px] ${r.cls || ""}`} />)}
      </div>
      <div className="flex-1 border-l-2 border-[#1c1c1c]" />
    </div>
    <svg viewBox="0 0 12 34" className="absolute top-[30px] left-[427px] h-[34px] w-3 fill-white"><path d="M5 0h2v24h5L6 34 0 24h5z" /></svg>
    <Hand at="left-[404px] top-[62px]" />
  </Sprite>
);

const CsLine = ({ t }) => (
  <div className="flex h-4 items-center"><span className="w-3 text-[7px] text-[#999]">cs</span><CsPage c="h-3.5 w-3" /><span className="ml-1">{t}</span></div>
);

const SpriteB = () => (
  <Sprite name="Component menu" at="left-[450px] top-[525px] h-[166px] w-[569px]">
    <div className="flex h-full">
      <div className="w-[374px] shrink-0 pt-0.5">
        {[
          { n: "1", name: "Main Camera", dim: 1, icons: <CamPhones /> },
          { n: "21", name: "Plants_group1", blue: 1 },
          { name: DL, icons: <Bulb />, cls: "bg-[#444]" },
          { name: DL + " (1)", dim: 1, icons: <Bulb /> },
          { name: DL + " (2)", dim: 1, icons: <Bulb /> },
          { name: DL + " (3)", icons: <Bulb /> },
          { name: DL + " (4)", icons: <LightFour /> },
          { name: "Main Camera (1)", dim: 1, icons: <CamPhones rings /> },
          { name: "Main Camera (2)", icons: <CamPhones rings />, cls: "border-transparent" },
        ].map((r) => <Row key={r.name} {...r} cls={`pl-px ${r.cls || ""}`} />)}
      </div>
      <div className="flex w-10 shrink-0 flex-col items-start gap-1 bg-[#343434] pt-1 pl-[13px]"><Db c="opacity-60" /><Db /></div>
      <div className="flex-1 overflow-hidden border-l-2 border-[#1f1f1f] pl-[104px]">
        <div className="-mt-1">
          <CsLine t="Edit" /><CsLine t="Edit" /><CsLine t="Hier" /><CsLine t="Jio" /><CsLine t="lS" /><CsLine t="Rec" /><CsLine t="Raw" /><CsLine t="Lin" /><CsLine t="LT" /><CsLine t="Tpc" /><CsLine t="Updat" />
        </div>
      </div>
    </div>
    <i className="absolute top-[33px] left-[374px] h-4 w-3 bg-[#2e5f68]" />
    <Menu at="left-[381px] top-[38px] w-[183px]" items={[m("- none -"), m("[ Transform ]", { hi: 1 }), m("[ Light ]"), sep, m("Apply to Children"), m("Add MonoScript")]} />
    <Hand at="left-[368px] top-[41px]" />
    <Hand at="left-[401px] top-[5px] -rotate-90" />
  </Sprite>
);

const SpriteC = () => (
  <section aria-label="Inline values" className="absolute top-[632px] left-[1019px] h-[59px] w-[337px] text-xs leading-4 whitespace-nowrap text-[#cfcfcf]">
    <div className="h-11 overflow-hidden bg-[#383838]">
      <div className="-ml-[21px]">
        <Row name={DL + " (3)"} icons={<Bulb />} />
        <Row name={DL + " (4)"} icons={<LightFour />} />
        <Row name="Main Camera (1)" dim icons={<CamPhones rings />} />
      </div>
    </div>
    <Hand at="left-[208px] top-[26px]" />
    <Hand at="left-[241px] top-[26px]" />
    <Hand at="left-[272px] top-[26px]" />
  </section>
);

const SpriteD = () => (
  <Sprite name="Components search" at="left-0 top-[691px] h-[392px] w-[373px]">
    <div className="flex h-full">
      <div className="w-5 bg-[#2b2b2b]" />
      <div className="flex-1">
        <div className="flex h-[15px] items-center bg-[#484848] pl-0.5">
          <Unity c="h-3 w-3" />
          <span className="ml-3.5 text-[13px] font-medium">palms*</span>
          <Lines c="ml-auto h-2.5 w-3.5" />
          <span className="ml-1 flex w-[43px] justify-end overflow-hidden bg-[#3d3d3d] text-[10px]">escription</span>
          <span className="flex w-[27px] justify-start bg-[#3d3d3d] pl-1.5"><Horn /></span>
        </div>
        <div className="w-[283px] border-r border-[#2a2a2a]">
          <Row cls="pl-[5px]" n="1" name="Main Camera" dim icons={<CamPhones />} />
          <Row cls="pl-[5px]" n="21" name="Plants_group1" blue />
          <Row cls="pl-[5px]" name={DL} icons={<Bulb />} />
          <Row cls="pl-[5px]" name={DL + " (1)"} icons={<Bulb />} />
        </div>
      </div>
    </div>
    <span className="absolute top-[47px] left-[334px] text-[9px]">asd</span>
    <form className="absolute top-[73px] left-[7px] w-[357px] border border-[#1d1d1d] bg-[#3e3e3e]">
      <div className="flex">
        <h2 className="h-[41px] w-[303px] border-r border-b border-[#1d1d1d] bg-[#272727] text-center leading-[42px]">Components Icons Light</h2>
        <svg viewBox="0 0 30 22" className="mt-2.5 ml-2 h-[22px] w-[30px]" fill="none" stroke="#2e648c" strokeWidth="1.300"><path d="M1 4V17H17M1 4H17M18 0V22M19 12H28" /><path d="M2 8H17M2 14H17" stroke="#4a4a4a" /></svg>
      </div>
      <p className="mt-4 pl-[19px] text-[8px] font-semibold">Filter: Light</p>
      <div className="mt-3 flex h-5 items-center">
        <span className="w-[88px] pl-[17px] text-[8px]">Sort by:</span>
        <button type="button" className="h-5 w-[77px] border-x border-[#222] bg-[#515151]">Hierarchy▲</button>
        <button type="button" className="h-5 w-[76px] border-r-2 border-[#222]">Name</button>
        <button type="button" className="h-5 w-[77px] border-r border-[#222]">Content</button>
      </div>
      <ul className="mt-2 mr-1 ml-3.5 border-t border-[#1d1d1d] bg-[#2f2f2f] pl-[47px] text-[8px]">
        {["", " (1)", " (2)", " (3)", " (4)"].map((s) => (
          <li key={s} className="flex h-4 items-center justify-between">
            {DL + s}
            <span className="flex h-3.5 w-[118px] items-center gap-0.5 border border-[#262626] bg-[#333] pl-1"><Bulb />{s === " (4)" && <><PageG c="ml-1 h-2.5 w-[9px]" /><PageX /><Purple /></>}</span>
          </li>
        ))}
      </ul>
      <button type="button" className="mt-[3px] block h-[21px] w-full border border-[#2a2a2a] bg-[#585858] text-[#e4e4e4]">Rescan for all Objects</button>
      <label className="mt-0.5 flex h-[19px] items-center gap-1"><input type="checkbox" className="h-3.5 w-[13px] appearance-none border border-[#1d1d1d] bg-[#2a2a2a]" />Include disabled objects</label>
      <label className="mt-[3px] flex h-[19px] items-center gap-1"><input type="checkbox" className="h-3.5 w-[13px] appearance-none border border-[#1d1d1d] bg-[#2a2a2a]" />Search uses only the root object of the clicked object</label>
      <p className="h-[21px] border-y border-[#252525] bg-[#444] pl-[3px] text-[10px] leading-[18px] text-[#b0b0b0]">ctrl/shift to multiselection; ctrl+A to select all; doubleclick to close</p>
      <p className="mt-px h-[21px] border-t border-[#252525] bg-[#444] pl-[3px] text-[10px] leading-[18px] text-[#b0b0b0]">leftclick to drag, ctrl+rightclick search in children</p>
    </form>
    <Hand at="left-[302px] top-[7px]" />
    <Hand at="left-[333px] top-[56px]" />
    <Hand at="left-[206px] top-[70px]" />
  </Sprite>
);

const SpriteE = () => (
  <Sprite name="Project tree" at="left-0 top-[1083px] h-[193px] w-[371px]">
    <div className="pt-px">
      <FoldRow lvl={0} open name="EMX" /><FoldRow lvl={1} open name="HierarchyUltra" /><FoldRow lvl={2} open name="Editor" />
      <FoldRow lvl={3} open name="_SAVED_DATA" /><FoldRow lvl={4} open name="_SCENES" /><FoldRow lvl={5} open name="Assets" />
      <FoldRow lvl={6} name="Top-Down Dungeons" /><FoldRow lvl={6} name="Top-Down Dungeons 2" />
      <FoldRow leaf lvl={6} sel name="asdasdasdasd" /><FoldRow leaf lvl={6} name="palms" />
      <FoldRow leaf lvl={5} name="untitled" /><FoldRow leaf lvl={4} name="HierarchyCommonData" />
    </div>
    <Hand at="left-[141px] top-[137px]" />
  </Sprite>
);

const SpriteF = () => (
  <Sprite name="Inspector copy and paste" at="left-[371px] top-[1069px] h-[207px] w-[360px] border-t-4 border-l-4 border-[#191919]">
    <div className="flex h-[19px] items-center bg-[#282828] pr-3.5">
      <span className="flex h-full w-[94px] items-center gap-1.5 bg-[#3c3c3c] pl-[9px]"><Info />Inspector</span>
      <Lock c="mr-2.5 ml-auto" /><Dots />
    </div>
    <div className="h-[55px] border-b border-[#1c1c1c] bg-[#3c3c3c] pt-[7px] pr-[3px] pl-2.5">
      <div className="flex">
        <AssetCube c="h-7 w-7" />
        <span className="ml-[9px] text-[13px] leading-4 text-[#9a9a9a]">asdasdasdasd</span>
        <span className="ml-auto flex h-3 items-center gap-1"><Help /><Sliders /><Gear /></span>
      </div>
      <button className="-mt-[7px] mr-px ml-auto block h-[17px] w-[43px] rounded-sm border border-[#333] bg-[#585858] leading-3.5">Open</button>
    </div>
    <div className="pt-1 pr-1 pl-[19px]">
      <button className="block h-[29px] w-full rounded-sm border border-[#303030] bg-[#585858]">Copy</button>
      <button disabled className="mt-[3px] block h-[29px] w-full rounded-sm border border-[#3a3a3a] bg-[#454545] text-[#8b8b8b]">Paste</button>
    </div>
    <p className="mt-[23px] pl-5 text-[#868686]">Data:</p>
    <label className="mt-[3px] flex items-center pl-[19px] text-[#868686]">
      <span className="w-[122px]">Script</span>
      <span className="flex h-[18px] w-[210px] items-center rounded-sm border border-[#333] bg-[#303030] px-1">
        <CsPage c="h-2.5 w-2 opacity-60" />
        <input readOnly aria-label="Script" defaultValue="HierarchyExternalSceneData" className="ml-1 w-[176px] bg-transparent" />
        <svg viewBox="0 0 10 10" className="ml-0.5 h-2.5 w-2.5 shrink-0" fill="none" stroke="#868686"><circle cx="5" cy="5" r="4.500" /><circle cx="5" cy="5" r="1" /></svg>
      </span>
    </label>
    <Hand at="left-[130px] top-[100px]" />
  </Sprite>
);

const SpriteG = () => (
  <Sprite name="Group menu" at="left-[731px] top-[774px] h-[224px] w-[499px]">
    <div className="flex h-full">
      <div className="w-[34px] shrink-0 bg-[#2b2b2b] pt-[74px]">
        <div className="flex h-4 items-center gap-1 bg-[#2d4470] pl-1 opacity-80">
          <svg viewBox="0 0 14 10" className="h-2.5 w-3.5" fill="none" stroke="#6a80ad" strokeWidth="1.500"><path d="M0 5Q7-2 14 5Q7 12 0 5" /><circle cx="7" cy="5" r="2" /></svg>
          <svg viewBox="0 0 10 12" className="h-3 w-2.5 fill-[#6a80ad]"><path d="M1 0H3L5 5 10 4V11L8 12H4L0 7 2 6Z" /></svg>
        </div>
      </div>
      <div className="w-[418px] shrink-0 border-r border-[#1c1c1c]">
        <div className="flex h-2.5 items-center bg-[#484848]">
          <span className="-mt-3 flex items-center"><Unity c="h-3 w-3" /><span className="ml-4 text-[13px] font-medium">palms*</span></span>
          <span className="-mt-2.5 ml-auto flex items-center pr-3"><Lines /><Horn c="ml-1.5 h-3 w-2" /><Triad c="ml-3 h-3 w-3" /><BlueBox c="ml-4 h-3 w-2.5" /><Padlock c="ml-2 h-3 w-2" /><Dots c="ml-8" /></span>
        </div>
        <Row cls="pl-[5px]" n="1" name="Main Camera" dim icons={<CamPhones />} end={<Db c="mr-[18px] opacity-60" />} />
        <Row cls="pl-[5px]" n="21" name="Plants_group1" blue />
        <Row cls="pl-[5px]" name={DL} /><Row cls="pl-[5px]" name={DL + " (1)"} />
        <Row cls="pl-[5px] bg-[#2c5d87]" bright name={DL + " (2)"} />
        <Row cls="pl-[5px]" name={DL + " (3)"} /><Row cls="pl-[5px]" name={DL + " (4)"} />
        <Row cls="pl-[5px]" dim name="Main Camera (1)" /><Row cls="pl-[5px]" name="Main Camera (2)" />
        <Row cls="pl-[5px]" name={DL + " (5)"} /><Row cls="pl-[5px]" name={DL + " (6)"} />
        <Row cls="pl-[5px] border-transparent" n="1" name={DL + " (7)"} />
      </div>
      <div className="-mt-0.5 flex-1 overflow-hidden pl-1">
        <div className="flex h-4 items-center"><TriDown c="mr-1.5 h-2.5 w-2 fill-[#666]" /><Folder open /><span className="ml-1">As</span></div>
        {[0, 1, 2, 3, 4, 5].map((i) => <div key={i} className="flex h-4 items-center pl-3.5"><Tri c="mr-1.5 h-2" /><Folder open={i === 5} /></div>)}
        <div className="flex h-4 items-center pl-7"><Tri c="h-2" /></div>
        <div className="flex h-4 items-center pl-7"><TriDown /></div>
      </div>
    </div>
    <Menu tight at="left-[159px] top-[23px] w-[323px]" items={[m("Group (Average Center)"), m("UnGroup", { dim: 1 }), m("Sibling", { sub: 1 }), m("Move To Parent", { k: "Alt+Ctrl+[" }), sep, m("Set As Target for Moving", { k: "Ctrl+Alt+P" }), m("Move To {Not Assigned}", { dim: 1, k: "Ctrl+Alt+R" }), sep, m("Duplicate Next To Object", { k: "Ctrl+Shift+D" }), sep, m("Multy Renamer")]} />
    <Hand at="left-[142px] top-[81px]" />
  </Sprite>
);

const HEnd = ({ t }) => (
  <>
    <span className="w-[61px] border-x border-[#2c2c2c] pr-4 text-right text-[9px]">{t}</span>
    <span className="flex h-4 w-9 border-r border-[#2c2c2c]" />
    <span className="flex h-4 items-center pl-[45px]"><Db /></span>
    <span className="ml-[22px]"><Toggle /></span>
  </>
);
const SpriteH = () => (
  <Sprite name="Light component menu" at="left-[731px] top-[998px] h-[278px] w-[609px]">
    <div className="flex h-full">
      <div className="w-[469px] shrink-0 pt-[3px]">
        {[
          { name: DL, icons: <Bulb />, end: <HEnd t="asd" /> },
          { name: DL + " (1)", cls: "bg-[#444]", icons: <span className="-m-0.5 flex h-4 w-2.5 items-center justify-center bg-[#2f7c8c]"><Bulb /></span>, end: <HEnd t="2" /> },
          { name: DL + " (2)", icons: <Bulb /> },
          { name: DL + " (3)", icons: <Bulb /> },
          { name: DL + " (4)", icons: <Bulb /> },
          { name: "Main Camera (1)", dim: 1, icons: <CamPhones rings /> },
          { name: "Main Camera (2)", icons: <CamPhones rings /> },
          { name: DL + " (5)", icons: <Bulb /> },
          { name: DL + " (6)", icons: <Bulb /> },
          { n: "1", name: DL + " (7)", icons: <Bulb /> },
          { name: DL + " (8)", icons: <Bulb />, cls: "border-transparent" },
        ].map((r) => <Row key={r.name} {...r} cls={`pl-0.5 ${r.cls || ""}`} />)}
      </div>
      <div className="flex-1 overflow-hidden border-l-2 border-[#1c1c1c]">
        <div className="-mt-1.5 pl-[105px]"><CsLine t="" /></div>
        <div className="pl-[88px]"><CsLine t="Mod" /></div>
        <div className="pl-32">
          {["in", "ye", "te", "E", "E", "H", "dd", "ra", "up", "dr", "er", "ul", "efl", "oc", "in"].map((t, i) => <p key={i} className="h-4">{t}</p>)}
        </div>
        <div className="-mt-0.5 flex h-4 items-center gap-1 pl-[74px]"><Tri /><Folder />Saved</div>
      </div>
    </div>
    <Menu at="left-[195px] top-[30px] w-[404px]" items={[m("Enabled", { hi: 1, check: 1, k: "Ctrl+CLICK" }), m("Ctrl+DRAG to move or Ctrl+Shift+DRAG to copy", { dim: 1 }), sep, m("Filter Selection By 'Light'", { dim: 1 }), sep, m("Copy Component"), m("Paste Component As New 'Light'", { dim: 1 }), m("Paste Component Values As New"), sep, m("Remove"), sep, m("Hide Light icon"), sep, m("Open Settings")]} />
    <Hand at="left-[184px] top-[25px]" />
  </Sprite>
);

const Port = ({ at }) => (
  <span className={`absolute flex h-3 w-3 items-center justify-center border border-[#3f6c76] bg-[#8ec3cc] ${at}`}><Tri c="h-2 w-1.5 fill-[#1c3a40]" /></span>
);
const Node = ({ at, children }) => (
  <span className={`absolute h-4 bg-[#315665] text-[#d6e6ea] [clip-path:polygon(0_0,100%_0,100%_100%,0_100%)] ${at}`}>
    <span className="block pl-1.5 leading-4">{children}</span>
    <svg viewBox="0 0 8 16" className="absolute top-0 right-0 h-4 w-2"><path d="M8 0V16H0Z" fill="#222" /><path d="M8 8V16H1Z" fill="#a9eef2" /></svg>
  </span>
);
const SpriteI = () => (
  <Sprite name="HyperGraph" at="left-0 top-[1276px] h-[209px] w-[362px]">
    <div className="flex h-[21px] items-center bg-[#282828]">
      <span className="h-full w-[88px] border-t-2 border-[#3a79bb] bg-[#383838] pl-1.5 leading-[22px]">HyperGraph</span>
      <WinBtns />
    </div>
    <div className="mt-[5px] h-full bg-[#242424] bg-[linear-gradient(#1a1a1a_1px,transparent_1px),linear-gradient(90deg,#1a1a1a_1px,transparent_1px)] bg-size-[17px_17px]">
      <div className="flex h-[13px] items-center text-[11px] text-[#5b6262]">
        <span className="w-[35px] pl-1">20%</span><span className="h-full w-9 bg-[#1d4044] pl-1 leading-3.5 text-[#5f9298]">40%</span><span className="w-9 pl-1.5">60%</span><span className="w-9 pl-1.5">80%</span><span className="pl-1.5">∞</span>
        <span className="ml-auto h-full w-[71px] bg-[#1d4044] pl-1 leading-3.5 text-[#4d8389]">AutoReloac</span><span className="w-[73px] pl-1.5">AutoHide</span>
      </div>
      <div className="mt-0.5 flex h-3 items-center text-[11px] text-[#3f7b81]">
        <span className="w-[145px] bg-[#1b383b] pl-1 leading-3">EVENTS MODE</span>
        <span className="ml-auto w-[181px] bg-[#1b383b] pl-1 leading-3"><span className="inline-block w-[56px]">Arrays</span><span className="inline-block w-[61px] border-l border-[#222] pl-1">Assets</span><span className="border-l border-[#222] pl-1">SelfRef</span></span>
      </div>
      <div className="flex h-3.5 items-center justify-between pr-2 pl-0.5 text-[10px] font-semibold">HyperGraph: 'Main Camera (UnityEngine.GameObject)'<svg viewBox="0 0 10 10" className="h-2.5 w-2.5" fill="none" stroke="#aaa"><path d="M.5 .5H9.500V9.500H.5ZM3 3 7 7M7 3 3 7" /></svg></div>
      <div className="flex gap-[3px] pt-[3px]">
        <button aria-label="Back" className="flex h-3.5 w-[13px] items-center justify-center bg-[#3d3d3d]"><Tri c="h-1.5 w-1 rotate-180 fill-black" /></button>
        <button aria-label="Forward" className="flex h-3.5 w-[13px] items-center justify-center bg-[#3d3d3d]"><Tri c="h-1.5 w-1 fill-black" /></button>
        <svg viewBox="0 0 12 12" className="ml-4 h-3.5 w-3 bg-[#3d3d3d]" fill="none" stroke="#111" strokeWidth="1.800"><circle cx="6" cy="6" r="4" strokeDasharray="10 2.500" /></svg>
      </div>
    </div>
    <span className="absolute top-[98px] left-12 flex h-[27px] w-[94px] items-center gap-2 bg-linear-to-b from-[#d0d0d0] to-[#b4b4b4] pl-0.5 font-semibold text-[#333]"><i className="h-4 w-3 rounded-full bg-[#eee] shadow" />Button</span>
    <span className="absolute top-[126px] left-12 h-4 w-[94px] bg-[#2d4f5c] pl-1">Button</span>
    <span className="absolute top-[142px] left-12 h-2.5 w-[93px] bg-[#1d3033] pl-[34px] leading-2">m_OnClick</span>
    <Port at="left-[143px] top-[141px]" />
    <svg viewBox="0 0 44 16" className="absolute top-[133px] left-[155px] h-4 w-11"><path d="M0 14Q14 14 36 4" stroke="#c9a436" fill="none" strokeWidth="1.300" /><path d="M31 2 44 2 35 9Z" fill="#d9b23a" /></svg>
    <Port at="left-[197px] top-[88px]" /><Port at="left-[197px] top-[111px]" /><Port at="left-[197px] top-[131px]" /><Port at="left-[197px] top-[163px]" />
    <i className="absolute top-[106px] left-[210px] h-[70px] w-1 bg-[#274754]" />
    <span className="absolute top-20 left-[210px] flex h-[27px] w-[95px] items-center gap-2 overflow-hidden bg-linear-to-b from-[#d0d0d0] to-[#b4b4b4] pl-0.5 font-semibold text-[#333]"><i className="h-4 w-3 shrink-0 rounded-full bg-[#eee] shadow" />Main Camera</span>
    <Node at="left-[210px] top-[110px] w-[77px]">Transform</Node>
    <Node at="left-[210px] top-[130px] w-[63px]">Camera</Node>
    <span className="absolute top-[147px] left-[217px] flex h-3.5 w-[88px] items-center gap-0.5 bg-[#1b2a2d] pl-1"><i className="h-2 w-2 bg-[#c40d0d]" />targetTexture</span>
    <Node at="left-[210px] top-[162px] w-[94px]">AudioListener</Node>
    <div className="absolute top-[192px] left-[221px] flex h-4 items-center gap-1">
      <button aria-label="Zoom out" className="flex h-2.5 w-2.5 items-center border border-[#555] px-px"><i className="h-px w-full bg-[#ccc]" /></button>
      <span className="flex h-1.5 w-[70px] items-center justify-end bg-[#353535] pr-6"><i className="h-3 w-2.5 border border-[#555] bg-[#3c3c3c]" /></span>
      <button aria-label="Zoom in" className="flex h-2.5 w-2.5 items-center justify-center border border-[#555]"><Plus c="h-2 w-2" /></button>
      <span className="pl-0.5 text-[11px]">140%</span>
    </div>
    <Hand at="left-[191px] top-[14px] rotate-180" /><Hand at="left-[249px] top-[12px] rotate-180" /><Hand at="left-[303px] top-[13px] rotate-180" />
    <Hand at="left-[63px] top-[49px]" /><Hand at="left-[103px] top-[114px]" />
  </Sprite>
);

const SpriteJ = () => (
  <Sprite name="Layouts menu" at="left-[362px] top-[1344px] h-[141px] w-[572px]" bg="bg-[#191919]">
    <div className="flex h-[30px] items-end">
      <span className="mr-px ml-2 h-[22px] w-[202px] bg-[#383838] pl-[7px] leading-6 font-medium">4 Split</span>
      <span className="h-[22px] w-[203px] bg-[#515151] pl-[7px] leading-6">MAIN</span>
      <span className="h-[22px] w-[30px] bg-[#383838]" />
      <button className="mr-[3px] mb-1 ml-auto flex h-5 w-[76px] items-center gap-1 rounded-sm bg-[#383838] pl-2"><svg viewBox="0 0 12 12" className="h-3 w-3"><circle cx="6" cy="6" r="6" fill="#ccc" /><path d="M3 6 5.500 8.500 9 3.500" stroke="#333" fill="none" strokeWidth="1.500" /></svg>Collab<TriDown c="h-1.5 w-2 fill-[#c4c4c4]" /></button>
    </div>
    <div className="flex h-[111px]">
      <div className="w-[139px] shrink-0 bg-[#383838]">
        <div className="flex h-[19px] items-center justify-end gap-2.5 bg-[#282828] pr-3"><Lock /><Dots /></div>
        <div className="mt-0.5 mr-1 h-4 rounded-r-md border border-[#1f1f1f] bg-[#2a2a2a]" />
        <div className="mt-0.5 flex h-[17px] items-center bg-[#424242] pl-0.5"><Horn /><Triad c="ml-3 h-3 w-3" /><BlueBox c="ml-4 h-3 w-2.5" /><Padlock c="ml-1.5 h-3 w-2" /><Dots c="mr-2.5 ml-auto opacity-50" /></div>
        <div className="flex h-4 items-center pl-[92px]"><Db c="opacity-60" /><span className="ml-auto"><Toggle off /></span></div>
        <div className="flex h-4 items-center pl-[52px]"><BlueBox /><Db c="ml-[30px]" /><Chevron c="ml-3" /><span className="ml-auto"><Toggle /></span></div>
        <div className="flex h-4 items-center pl-[92px]"><Db /><span className="ml-auto"><Toggle /></span></div>
        <div className="flex h-4 items-center pl-[92px]"><Db /><span className="ml-auto"><Toggle /></span></div>
      </div>
      <div className="mx-1 w-[359px] shrink-0 bg-[#383838]">
        <div className="flex h-[19px] bg-[#282828]"><span className="flex w-20 items-center gap-1 bg-[#383838] pl-1.5"><Folder c="h-2.5 w-3" />Project</span></div>
        <div className="flex h-5 items-center pl-1"><Plus /><TriDown c="ml-1.5 h-1.5 w-2 fill-[#c4c4c4]" /><span className="ml-3.5 flex h-4 flex-1 items-center rounded-md border border-[#1f1f1f] bg-[#2a2a2a] pl-1"><Loupe c="h-2 w-2" /></span></div>
        <TriDown c="mt-3.5 ml-[100px] h-2 w-2 fill-[#666]" />
        <div className="mt-[37px] pl-[116px]"><CsLine t="LayoutsMod" /></div>
      </div>
      <div className="flex-1 overflow-hidden bg-[#3a3a3a]">
        <div className="flex h-[19px] items-center gap-1 bg-[#383838] pl-1.5"><Info />Inspector</div>
        <div className="flex items-start pt-2.5 pl-4"><Cube c="h-5 w-5" /><TriDown c="mt-4 h-1 w-1.5 fill-white" /><span className="ml-2.5 flex h-3.5 w-3.5 items-center justify-center border border-[#1c1c1c] bg-[#2a2a2a]"><Tick c="h-2.5 w-2.5" ink="#fff" /></span></div>
        <p className="pl-10 text-[#a8a8a8]">Tag</p>
        <div className="mt-3 flex h-4 items-center border-t border-[#222] pl-1.5 font-semibold"><TriDown /><Axis c="ml-1.5 h-3.5 w-3.5" /><span className="ml-6">T</span></div>
      </div>
    </div>
    <Arrow left at="left-[60px] top-4" /><Arrow at="left-[101px] top-4" />
    <Menu at="left-[256px] top-[15px] w-[247px]" items={[m("Save Current Layout To MAIN"), sep, m("Enable Layouts AutoSave", { hi: 1 }), sep, m("Remove MAIN"), sep, m("Open TopBar Settings")]} />
    <Hand at="left-[75px] top-[17px]" /><Hand at="left-[239px] top-[17px]" />
  </Sprite>
);

const KEnd = ({ t, off, box, sel, chev }) => (
  <span className={`flex h-[15px] w-[189px] items-center ${sel ? "bg-[#35567d]" : "bg-[#3a414c]"}`}>
    <span className="flex h-[15px] w-[43px] shrink-0 items-center justify-end overflow-hidden border-r border-[#2c323c] text-[8px]">{t}</span>
    <span className="flex h-[15px] w-[18px] shrink-0 border-r border-[#2c323c]" />
    <span className="flex h-[15px] w-[53px] shrink-0 items-center border-r border-[#2c323c] pl-[38px]">{box && <BlueBox />}</span>
    <Db c="ml-6" />
    {chev && <Chevron c="ml-3" />}
    <span className="ml-auto"><Toggle off={off} /></span>
  </span>
);
const SpriteK = () => (
  <Sprite name="Columns resize" at="left-[934px] top-[1319px] h-[166px] w-[508px]">
    <div className="flex h-[22px] items-center border-b border-[#222] bg-[#3a3a3a] pl-1">
      <Plus /><TriDown c="ml-2 h-1.5 w-2 fill-[#c4c4c4]" />
      <label className="mr-2.5 ml-auto flex h-4 w-[310px] items-center rounded-md border border-[#1f1f1f] bg-[#2a2a2a] pl-1"><Loupe /><input aria-label="Search" placeholder="All" className="w-full bg-transparent pl-[3px] placeholder:text-[#7c7c7c]" /></label>
    </div>
    <div className="flex">
      <div className="h-36 w-7 shrink-0 bg-[#2b2b2b] pt-[81px]"><div className="h-4 bg-[#2c4a78]" /></div>
      <div className="w-[473px] shrink-0 border-r-2 border-[#1c1c1c]">
        <div className="flex h-[17px] items-center bg-[#484848] pl-1.5">
          <Unity c="h-3.5 w-3.5" /><span className="ml-2 text-[13px] font-medium">palms*</span>
          <span className="ml-auto flex h-full w-[17px] items-center bg-[#2e6a70]"><Lines /></span>
          <span className="flex h-full w-[189px] items-center bg-[#454c57]"><span className="flex w-11 shrink-0 justify-end overflow-hidden text-[10px]">escription</span><Horn c="ml-1 h-3 w-2.5" /><Triad c="ml-3.5 h-3 w-3" /><BlueBox c="ml-4 h-3 w-2.5" /><Padlock c="ml-1.5 h-3 w-2" /><Dots c="mr-2.5 ml-auto opacity-50" /></span>
        </div>
        <Row cls="pl-[5px]" n="1" name="Main Camera" dim icons={<CamPhones />} end={<KEnd off />} />
        <Row cls="pl-[5px]" n="21" name="Plants_group1" blue end={<KEnd box chev />} />
        <Row cls="pl-[5px]" name={DL} icons={<Bulb />} end={<KEnd />} />
        <Row cls="pl-[5px]" name={DL + " (1)"} icons={<Bulb />} end={<KEnd t="2" />} />
        <Row cls="pl-[5px] bg-[#2c5d87]" bright name={DL + " (2)"} icons={<Bulb />} end={<KEnd t="qwe" sel />} />
        <Row cls="pl-[5px]" name={DL + " (3)"} icons={<Bulb />} end={<KEnd t="q3rwewfwe" />} />
        <div className="relative"><Row cls="pl-[5px]" name={DL + " (4)"} icons={<LightFour />} /><span className="absolute top-0 right-0 opacity-80"><KEnd t="q3rwewfwe" /></span><Purple c="absolute top-[3px] left-[327px]" /></div>
        <Row cls="pl-[5px]" name="Main Camera (1)" dim icons={<CamPhones rings />} end={<KEnd t="q3rwewfwe" off />} />
      </div>
    </div>
    <i className="absolute top-[22px] left-[311px] z-10 h-36 w-px bg-[#d81313]" />
    <div role="tooltip" className="absolute top-[48px] left-[213px] z-10 border border-[#1c1c1c] bg-[#3a3a3a] px-1 py-1 leading-[15px]">Show Category List<br />Drag the icon to change width</div>
    <Arrow left at="left-[276px] top-[31px]" /><Arrow left at="left-[339px] top-[31px]" /><Arrow at="left-[381px] top-[31px]" /><Arrow left at="left-[411px] top-[31px]" /><Arrow at="left-[428px] top-[31px]" />
    <Hand at="left-[294px] top-[33px]" /><Hand at="left-[355px] top-[33px]" /><Hand at="left-[416px] top-[33px]" />
  </Sprite>
);

const Vec = ({ name, v }) => (
  <div className="flex h-[22px] items-center pl-[18px]">
    <span className="w-[132px] text-[#a8a8a8]">{name}</span>
    {["X", "Y", "Z"].map((a, i) => (
      <label key={a} className="flex w-[66px] items-center gap-1"><span className="w-2 text-[#a8a8a8]">{a}</span><input defaultValue={v[i]} className="h-[18px] w-[50px] rounded-sm border border-[#1f1f1f] bg-[#2a2a2a] pl-[3px]" /></label>
    ))}
    <span className="-mt-1.5 flex gap-[3px]"><span className="rounded-sm bg-[#585858]"><Magnet c="h-3 w-[13px] -rotate-90" /></span><svg viewBox="0 0 12 12" className="h-3 w-3 bg-[#515151]"><path d="M2 2h8v8H2z" fill={name === "Position" ? "#8fd12e" : "#54486e"} /><path d="M5 2v8M8 2v8M2 5h8M2 8h8" stroke="#d8e8a0" strokeWidth=".4" /></svg></span>
  </div>
);
const Pick = ({ label, value, w, c = "" }) => (
  <label className={`flex items-center gap-1 text-[#a8a8a8] ${c}`}>{label}
    <span className={`relative flex ${w}`}>
      <select className="h-[18px] w-full appearance-none rounded-sm border border-[#303030] bg-[#515151] pl-[3px] text-[#e0e0e0]"><option>{value}</option></select>
      <TriDown c="absolute right-1.5 top-1.5 h-1.5 w-2 fill-[#c4c4c4]" />
    </span>
  </label>
);
const SpriteL = () => (
  <Sprite name="Transform snapping" at="left-[1442px] top-[1147px] h-[338px] w-[377px]">
    <div className="flex h-[19px] items-center bg-[#282828] pr-3">
      <span className="flex h-full w-[92px] items-center gap-1.5 border-t-2 border-[#3a79bb] bg-[#3c3c3c] pl-[7px]"><Info />Inspector</span>
      <Lock c="mr-2.5 ml-auto" /><Dots />
    </div>
    <div className="bg-[#3c3c3c]">
      <div className="flex h-[33px] items-end pl-1.5">
        <Cube c="-mb-0.5 h-6 w-6" /><TriDown c="-mb-2 -ml-1 h-1 w-1.5 fill-white" />
        <label className="relative mb-1.5 ml-3 flex"><input type="checkbox" defaultChecked aria-label="Active" className="peer h-3.5 w-3.5 appearance-none border border-[#1f1f1f] bg-[#2a2a2a]" /><Tick c="invisible absolute inset-0.5 h-2.5 w-2.5 peer-checked:visible" ink="#fff" /></label>
        <input aria-label="Name" defaultValue={DL + " (2)"} className="mb-1 ml-1.5 h-[18px] w-[241px] rounded-sm border border-[#1f1f1f] bg-[#2a2a2a] pl-[3px] font-semibold" />
        <label className="mb-[5px] ml-1 flex items-center gap-1"><input type="checkbox" className="h-3.5 w-3.5 appearance-none border border-[#2a2a2a] bg-[#333]" />Static</label>
        <TriDown c="mb-2.5 ml-0.5 h-1.5 w-2 fill-[#c4c4c4]" />
      </div>
      <div className="flex items-center pt-px pb-2 pl-[41px]"><Pick label="Tag" value="Untagged" w="w-[131px]" /><Pick c="ml-[15px]" label="Layer" value="Default" w="w-[121px]" /></div>
    </div>
    <div className="flex h-[21px] items-center border-y border-[#242424] bg-[#404040] pr-3 pl-1 font-semibold"><TriDown /><Axis c="ml-2 h-3.5 w-3.5" /><span className="ml-[25px]">Transform</span><span className="ml-auto flex items-center gap-2.5"><Help /><Sliders /><Dots /></span></div>
    <div className="pt-[5px]"><Vec name="Position" v={["0", "3", "0"]} /><Vec name="Rotation" v={["50", "-30", "0"]} /><Vec name="Scale" v={["1", "1", "1"]} /></div>
    <div className="mt-px flex h-6 items-center border-y border-[#242424] bg-[#404040] pl-[7px] font-semibold">
      <Tri />
      <svg viewBox="0 0 14 14" className="ml-1 h-3.5 w-3.5" fill="none" strokeWidth="1.600"><path d="M1 9 6 2" stroke="#ccc" /><path d="M5 13 12 5M7 6 12 11M4 9 8 13" stroke="#e3a918" /></svg>
      <span className="ml-1.5 flex h-3.5 w-3.5 items-center justify-center border border-[#1c1c1c] bg-[#2a2a2a]"><Tick c="h-2.5 w-2.5" ink="#fff" /></span>
      <span className="ml-[5px]">Light</span>
    </div>
    <Menu at="left-[61px] top-[149px] w-[315px]" items={[m("Enable Scale Snapping"), sep, m("Holding HotKey to fast invert Snap"), sep, m("Auto-Apply Snap (If the selection changes)"), sep, m("Snap X-axis", { check: 1 }), m("Snap Y-axis", { check: 1 }), m("Snap Z-axis", { check: 1 }), sep, m("Use Local Space", { check: 1 }), sep]} />
    <Hand at="left-[341px] top-[145px]" />
  </Sprite>
);

const Pencil = ({ c = "" }) => <svg viewBox="0 0 12 12" className={`h-3 w-3 shrink-0 ${c}`}><path d="M1.500 1 10 10.500" stroke="#e98a24" strokeWidth="2.800" /><path d="M0 0 2 1" stroke="#eee" /></svg>;
const SpriteM = () => (
  <Sprite name="Project Folders" at="left-0 top-[1485px] h-[294px] w-[332px]">
    <div className="mt-0.5 flex h-[19px] items-center bg-[#282828]">
      <span className="h-full w-[104px] border-t-2 border-[#3a79bb] bg-[#383838] pl-1.5 leading-[18px]">Project Folders</span><WinBtns />
    </div>
    <div className="mt-[5px] border-t border-[#2c2c2c] bg-linear-to-b from-[#2e2e2e] to-[#383838] to-10%">
      <div className="flex h-[39px] items-center pl-[3px]">
        <TriDown />
        <svg viewBox="0 0 30 10" className="ml-1 h-2.5 w-[30px]"><path d="M1 2H11V9H1Z" fill="#8da39f" stroke="#2bd02b" /><path d="M14 1v8M17 3v5" stroke="#56d356" strokeWidth="2" /><path d="M20 3h4v4h-4zM26 7V3l3 4V3" fill="none" stroke="#1fce1f" /></svg>
        <span className="ml-[3px]">Default</span>
        <button className="mt-0.5 ml-auto h-5 w-[54px] border-x border-[#222] bg-[#4c4c4c]">Deep</button>
        <button className="mt-0.5 h-5 w-[52px] pl-0.5">Simple</button>
        <svg viewBox="0 0 8 8" className="mr-[3px] mb-5 h-2 w-2" fill="none" stroke="#aaa"><path d="M.5.5H7.500V7.500H.5ZM2.500 2.500 5.500 5.500M5.500 2.500 2.500 5.500" /></svg>
      </div>
      <div className="flex h-5 items-center bg-[#484848] pl-[22px] text-[11px] font-semibold italic"><Folder tint="#8c999e" /><span className="ml-2 text-[#a8a8a8]">HotButtonsBar</span></div>
      <div className="flex h-5 items-center pl-2.5 text-[11px] font-semibold italic"><TriDown /><Folder c="ml-1 h-3 w-3.5" tint="#8c999e" /><span className="ml-2">RightMods</span></div>
      {["CustomMod", "RightModBase", "RightModsMgr", "RightMods", "RightMods"].map((t, i) => <div key={i} className="flex h-5 items-center pl-8"><CsPage c="h-[15px] w-3" /><span className="ml-2">{t}</span></div>)}
      {["Mods", "Settings"].map((t) => <div key={t} className="flex h-5 items-center pl-[18px]"><Tri /><Folder c="ml-1 h-3 w-3.5" tint="#8c999e" /><span className="ml-2">{t}</span></div>)}
      <div className="flex h-5 items-center pr-1.5 pl-[22px]"><Folder tint="#8c999e" /><b className="ml-2 text-[11px] font-semibold italic">AdditionalFuncs.cs</b><span className="ml-auto pr-1 text-[8px]">asda</span><Pencil /></div>
      <div className="flex h-5 items-center pr-1.5 pl-2.5"><Tri /><Folder c="ml-1 h-3 w-3.5" tint="#8c999e" /><b className="ml-2 w-[152px] shrink-0 text-[11px] font-semibold italic">RightClickGameObjectMenu</b><button className="ml-[3px] flex h-[17px] w-[42px] shrink-0 items-center gap-1 rounded-sm bg-[#555] pl-[3px]">type<TriDown c="h-1.5 w-2 fill-[#c4c4c4]" /></button><svg viewBox="0 0 14 10" className="ml-1 h-2.5 w-3.5" stroke="#2f5a4e" strokeWidth="1.500"><path d="M0 1H9M3 5H12M5 9H14" /></svg><Pencil c="ml-auto" /></div>
      <div className="h-2 bg-[#323840]" />
    </div>
    <Menu at="left-[111px] top-[71px] w-[240px]" items={[m("Show Descriptions", { check: 1 }), sep, m("Rename 'Default'", { dim: 1 }), m("Remove 'Default'Category", { dim: 1 }), sep, m("Remove"), sep, m("Background Colors"), sep, m("Open Bookmarks Settings")]} />
    <Hand at="left-[239px] top-[53px]" /><Hand at="left-[96px] top-[74px]" />
    <Hand at="left-[200px] top-[237px] rotate-180" /><Hand at="left-[237px] top-[237px] rotate-180" /><Hand at="left-[304px] top-[212px] rotate-180" />
  </Sprite>
);

const SpriteN = () => (
  <Sprite name="Last selection menu" at="left-0 top-[1779px] h-[177px] w-[302px]">
    <div className="h-[29px] bg-[#191919] pt-1 pl-1"><Tools on={2} /></div>
    <div className="h-[18px] border-b border-[#1c1c1c] bg-[#2a2a2a]" />
    <p className="mt-[99px] pl-2.5 text-[8px]">{DL}</p>
    <Menu at="left-[61px] top-[20px] w-[235px]" items={[m("Open Last Selection Mod"), sep, m("[2]   Directional Light (1)"), m(DL + " (1)"), m(DL), m("[3]   Main Camera"), sep, m("Open Las Selection Settings")]} />
    <Hand at="left-[52px] top-[15px]" />
  </Sprite>
);

const SpriteO = () => (
  <Sprite name="Scenes history menu" at="left-[302px] top-[1796px] h-[160px] w-[369px]">
    <div className="h-[29px] bg-[#191919] pt-1 pl-1"><Tools on={3} /></div>
    <div className="flex h-[131px]">
      <div className="flex w-[25px] shrink-0 flex-col items-center border-r-2 border-[#191919] bg-[#333] pt-1"><Dots /><Dots c="mt-14" /><span className="mt-1 flex items-center gap-0.5 text-[8px] text-[#888]">5(<Dots /></span></div>
      <div className="flex-1">
        <div className="flex h-5 bg-[#282828]"><span className="flex w-[92px] items-center gap-1 bg-[#3c3c3c] pl-2"><Info />Inspector</span></div>
        <div className="flex h-5 items-center pl-1.5"><Plus /><TriDown c="ml-1.5 h-1.5 w-2 fill-[#c4c4c4]" /></div>
        <div className="flex">
          <div className="h-24 w-8 bg-[#2b2b2b]" />
          <div className="flex-1">
            <div className="flex h-4 items-center bg-[#484848]"><Unity /><span className="ml-3 text-[13px] font-medium">palms*</span></div>
            <Row cls="pl-[5px]" n="1" name="Main Camera" /><Row cls="pl-[5px]" n="21" name="Plants" blue />
            <Row cls="pl-[5px]" name={DL} /><Row cls="pl-[5px]" name={DL + " (1)"} /><Row cls="pl-[5px]" name={DL + " (2)"} icons={<Bulb />} />
          </div>
        </div>
      </div>
    </div>
    <Menu at="left-[88px] top-[16px] w-[272px]" items={[m("Open Scenes History Mod"), sep, m("   palms", { hi: 1, check: 1 }), m("   asdasdasdasd"), sep, m("+ Add All Opened Scenes"), sep, m("Open Scenes History Mod Settings")]} />
    <Hand at="left-[70px] top-[19px]" />
  </Sprite>
);

const SpriteP = () => (
  <Sprite name="Bookmarks menu" at="left-[671px] top-[1629px] h-[327px] w-[477px]">
    <div className="flex h-[29px] justify-between bg-[#191919] pt-[5px]"><Tools on={1} c="-ml-4" /><button aria-label="Play" className="flex h-5 w-[18px] shrink-0 items-center justify-end bg-[#383838]"><Tri c="fill-[#c4c4c4]" /></button></div>
    <div className="h-5 bg-[#282828]" />
    <div className="flex h-[22px] items-center pl-3"><Plus /></div>
    <div className="flex">
      <div className="h-[270px] w-9 shrink-0 border-l-4 border-[#1c1c1c] bg-[#2b2b2b]" />
      <div className="w-[296px] border-r border-[#4c4c4c]">
        {[0, 1, 2, 3, 4, 5, 6, 7, 8, 9, 10, 11].map((i) => <div key={i} className="h-4 border-b border-[#4c4c4c]" />)}
      </div>
      <div className="h-[224px] w-[78px] border-r border-[#4c4c4c] text-[9px]"><p className="mt-4 h-4 opacity-30">MainCamera</p><p className="mt-24 h-4 opacity-30">MainCamera</p><p className="h-4">MainCamera</p></div>
    </div>
    <span className="absolute top-[182px] left-[282px] flex h-4 items-center text-[8px]">sd<NullQwe /></span>
    <Menu at="left-[21px] top-[16px] w-[264px]" items={[m("Open Bookmarks Mod"), sep, m("Category - Default", { hi: 1, sub: 1 }), m("Category - Spawn Points", { sub: 1 }), sep, m("1) 'Default'"), m("2) 'Spawn Points'", { check: 1 }), m("+ Add Category"), sep, m("Rename 'Spawn Points'"), m("Remove 'Spawn Points' Category"), sep, m("Use Background Colors"), m("Background Colors", { dim: 1 }), m("Show Descriptions"), sep, m("Open Bookmarks Mod Settings")]} />
    <Menu at="left-[279px] top-[45px] w-[194px]" items={[m(DL + " (6)"), m(DL + " (8)")]} />
    <Hand at="left-[5px] top-[18px]" />
  </Sprite>
);

const SpriteQ = () => (
  <Sprite name="Project folders menu" at="left-[1148px] top-[1661px] h-[89px] w-[331px]">
    <div className="h-[25px] bg-[#191919] pt-[3px]"><Tools on={5} c="-ml-[62px]" /></div>
    <div className="flex h-5 items-center bg-[#282828]"><span className="h-full w-[52px] bg-[#3c3c3c] leading-7">pector</span></div>
    <div className="h-[23px] bg-[#383838]" />
    <div className="flex h-[17px] items-center bg-[#484848] pl-5"><span className="text-[13px] font-medium">palms*</span><Lines c="ml-auto h-2.5 w-3.5" /><span className="ml-2 border-l border-[#333] pl-5 text-[11px]">Tags</span></div>
    <Row cls="opacity-60" name="Main Camera" />
    <Menu at="left-[69px] top-[15px] w-[245px]" items={[m("Open Project Folders", { hi: 1 }), sep, m("Open Project Folders Settings")]} />
    <Hand at="left-[54px] top-[17px]" />
  </Sprite>
);

const SpriteR = () => (
  <Sprite name="HyperGraph menu" at="left-[1148px] top-[1750px] h-[206px] w-[334px]">
    <div className="h-7 bg-[#191919] pt-[3px] pl-[3px]"><Tools on={0} /></div>
    <div className="flex h-5 items-center bg-[#282828] pl-2"><Dots /></div>
    <p className="h-12 bg-[#35353c] pt-3.5 text-[11px]">ht (</p>
    <div className="flex h-5 items-center bg-[#282828] pl-2"><Dots /></div>
    <p className="mt-0.5 flex items-center gap-0.5 text-[9px] text-[#888]">5(<Dots /></p>
    <div className="mt-[61px] pl-[60px]"><Row dim name="Main Camera (1)" icons={<CamPhones rings />} /></div>
    <Menu at="left-[17px] top-[19px] w-[311px]" items={[m("Open HyperGraph"), m("Open HyperGraph and attach to Inspector"), sep, m("UnityEvents Mode", { check: 1 }), sep, m("Auto refresh when selection changed", { check: 1 }), m("Display loading indicator", { check: 1 }), m("Red null references", { check: 1 }), sep, m("Open HyperGraph Settings")]} />
    <Hand at="left-[9px] top-[14px]" />
  </Sprite>
);

const SpriteS = () => (
  <Sprite name="Expanded memory menu" at="left-[1482px] top-[1788px] h-[168px] w-[398px]">
    <div className="h-[29px] bg-[#191919] pt-[5px] pl-1"><Tools on={4} /></div>
    <div className="flex h-[139px]">
      <div className="flex w-6 shrink-0 flex-col items-center border-r-2 border-[#191919] bg-[#333] pt-1.5"><Dots /><Plus c="mt-12 h-1.5 w-1.5" /><Dots c="mt-12" /></div>
      <div className="flex-1">
        <div className="flex h-5 bg-[#282828]"><span className="flex w-[92px] items-center gap-1 bg-[#3c3c3c] pl-2"><Info />Inspector</span></div>
        <div className="flex h-5 items-center pl-1.5"><Plus /><TriDown c="ml-1.5 h-1.5 w-2 fill-[#c4c4c4]" /></div>
        <div className="flex">
          <div className="h-[110px] w-8 bg-[#2b2b2b]" />
          <div className="flex-1">
            <div className="flex h-4 items-center bg-[#484848]"><Unity /><span className="ml-3 text-[13px] font-medium">palms*</span><span className="ml-auto text-[11px]">gs</span></div>
            <Row cls="pl-[5px]" n="1" name="Main Camera" dim /><Row cls="pl-[5px]" n="21" name="Plants" blue />
            <Row cls="pl-[5px]" name={DL} /><Row cls="pl-[5px]" name={DL + " (1)"} /><Row cls="pl-[5px]" name={DL + " (2)"} />
          </div>
        </div>
      </div>
    </div>
    <Menu at="left-[106px] top-[16px] w-[286px]" items={[m("Open Hierarchy Expanded Mem Mod"), sep, m("No Items", { dim: 1 }), sep, m("Collapse All", { hi: 1 }), sep, m("+ Create New State"), sep, m("Open Expanded Mem Settings")]} />
    <Hand at="left-[97px] top-[18px] opacity-60" />
  </Sprite>
);

const Tab = ({ icon, children, on, c = "" }) => (
  <span className={`flex h-full shrink-0 items-center gap-1 overflow-hidden pt-px ${on ? "border-t-2 border-[#3a79bb] bg-[#383838]" : ""} ${c}`}>{icon}{children}</span>
);

const SpriteT1 = () => (
  <Sprite name="Last selection bar" at="left-0 top-[1956px] h-[92px] w-[430px]">
    <div className="flex h-[21px] items-center border-t border-[#191919] bg-[#282828]">
      <Tab icon={<Runner />} c="w-[90px] pl-[7px]">Animator</Tab><Tab icon={<Clock />} c="w-[97px] pl-2">Animation</Tab><Tab icon={<Stopwatch />} c="w-[84px] pl-2">Profiler</Tab>
      <Tab on c="w-[129px] pl-[7px]">Last Selection Mod</Tab><Dots c="mr-3 ml-auto" />
    </div>
    <div className="flex h-[31px] items-center">
      <span className="flex w-10 shrink-0 justify-between px-2"><Tri c="h-2 w-1 rotate-180 fill-[#111]" /><Tri c="h-2 w-1 fill-[#111]" /></span>
      {["Main Camera", DL, DL, DL].map((t, i) => (
        <button key={i} className={`relative flex h-7 w-[97px] shrink-0 items-center gap-1.5 border-r border-[#2a2a2a] pl-1 text-[8px] ${i === 1 ? "bg-linear-to-r from-[#4a4a4a] from-30% to-[#31606f] to-30%" : i === 2 ? "bg-linear-to-r from-[#274f5a] from-30% to-[#3c3c3c] to-30%" : "bg-[#3c3c3c]"}`}>
          <Cube c="h-5 w-5" />{t}{(i === 0 || i === 3) && <sup className="absolute top-2 right-3 text-[9px]">{i === 0 ? "3" : "2"}</sup>}
        </button>
      ))}
    </div>
    <ConsoleBars />
    <Arrow left at="left-[185px] top-[42px]" /><Arrow at="left-[227px] top-[42px]" /><Hand at="left-[201px] top-[43px]" />
  </Sprite>
);
const ListArt = ({ c = "" }) => <svg viewBox="0 0 20 24" className={`h-6 w-5 shrink-0 ${c}`} fill="none" stroke="#6f6f6f" strokeWidth="2"><path d="M2 24V2H19M8 8V24M2 7H19M12 12H19M12 17H19M12 22H19" /></svg>;
const SpriteT2 = () => (
  <Sprite name="Expanded states bar" at="left-[430px] top-[1956px] h-[92px] w-[431px]">
    <div className="flex h-[21px] items-center border-t border-[#191919] bg-[#282828]">
      <Tri c="ml-1.5 h-2 w-1 rotate-180 fill-[#ccc]" /><Tab c="w-[83px] pl-[7px]">Animation</Tab><Tab icon={<Stopwatch />} c="w-[83px] pl-[5px]">Profiler</Tab><Tab c="w-[133px] pl-1">Scenes History Mod</Tab>
      <Tab on c="w-[86px] pl-[7px]">Hierarchy Expanded</Tab><Tri c="ml-2 h-2 w-1 fill-[#ccc]" /><Dots c="ml-3" />
    </div>
    <div className="flex h-8 items-center">
      {["Expanded 1", "Expanded 2", "Expanded 3"].map((t, i) => (
        <button key={t} className={`flex h-7 w-32 shrink-0 items-center gap-1 border-r-2 border-[#2a2a2a] pl-2 text-[8px] ${i === 1 ? "bg-linear-to-r from-[#4a4a4a] from-20% to-[#376a78] to-20%" : i === 2 ? "bg-linear-to-r from-[#27545f] from-20% to-[#3c3c3c] to-20%" : "bg-[#3e3e3e]"}`}><ListArt />{t}</button>
      ))}
      <span className="ml-3 text-[9px]">≡</span><Plus c="ml-3.5 h-1.5 w-1.5" />
    </div>
    <ConsoleBars />
    <Arrow left at="left-[194px] top-10" /><Arrow at="left-[236px] top-10" /><Hand at="left-[209px] top-[41px]" /><Hand at="left-[406px] top-11" />
  </Sprite>
);
const SpriteT3 = () => (
  <Sprite name="Scenes history bar" at="left-[861px] top-[1956px] h-[92px] w-[403px]">
    <div className="flex h-[21px] items-center border-t border-[#191919] bg-[#282828]">
      <Tri c="ml-1.5 h-2 w-1 shrink-0 rotate-180 fill-[#ccc]" /><Tab c="w-[83px] pl-[7px]">Animation</Tab><Tab icon={<Stopwatch />} c="w-[81px] pl-[5px]">Profiler</Tab>
      <Tab on c="w-[133px] pl-1.5">Scenes History Mod</Tab><Tab c="pl-2">Hierarchy Expanded</Tab>
    </div>
    <div className="flex h-8 items-center">
      {["palms", "asdasdasdasd", "asdasdasdasd"].map((t, i) => (
        <button key={i} className={`flex h-7 w-[136px] shrink-0 items-start justify-between border-r border-[#222] pt-0.5 pl-1.5 text-[8px] ${i === 0 ? "bg-[#4a4a4a]" : i === 1 ? "bg-linear-to-r from-[#444] from-10% to-[#2c5865] to-10%" : "bg-linear-to-r from-[#2c5865] from-10% to-[#3e3e3e] to-10%"}`}>
          <span className="-mt-0.5">{t}</span>{i === 0 ? <Unity c="h-6 w-6" fill="#f2b233" ink="#6b4408" /> : <Unity c="h-6 w-6" fill="#dff2f8" ink="#222" />}
        </button>
      ))}
    </div>
    <ConsoleBars />
    <Arrow left at="left-[192px] top-[39px]" /><Arrow at="left-[234px] top-[39px]" /><Hand at="left-[116px] top-[35px]" /><Hand at="left-[208px] top-[39px]" />
  </Sprite>
);
const SpriteT4 = () => (
  <Sprite name="Selection history bar" at="left-[1264px] top-[1956px] h-[92px] w-[431px]">
    <div className="flex h-[22px] items-center border-t-2 border-[#191919] bg-[#282828]">
      <Tab on icon={<Star c="h-2.5 w-2.5 shrink-0" />} c="w-[81px] pl-1.5">Default</Tab>
      <Tab icon={<svg viewBox="0 0 8 6" className="h-1.5 w-2 fill-[#888]"><path d="M0 3 3.500 1V5ZM8 3 4.500 1V5Z" /></svg>} c="pl-2">GameObjects Selection Hi...</Tab>
      <Dots c="mr-3 ml-auto" />
    </div>
    <div className="flex h-12 items-center">
      <div className="w-[145px] shrink-0 pl-[45px]"><button className="flex h-4 w-[55px] items-center gap-[3px] border border-[#2c2c2c] bg-[#3c3c3c] pl-px text-[11px]"><svg viewBox="0 0 9 9" className="h-[9px] w-[9px] shrink-0" stroke="#ccc" strokeWidth="1.500"><path d="M0 1H9M0 4.500H9M0 8H9" /></svg>Default</button></div>
      {[0, 1].map((i) => (
        <button key={i} className={`flex h-[45px] w-[143px] shrink-0 items-center gap-0.5 border-x border-[#2a2a2a] pl-1 ${i ? "bg-linear-to-r from-[#27505c] from-10% to-[#413f49] to-10%" : "bg-linear-to-r from-[#4d4c57] from-12% to-[#2f6174] to-12%"}`}><Cube c="h-9 w-9 text-[#c9c8d4]" />{DL}</button>
      ))}
    </div>
    <div className="flex h-[19px] items-center bg-[#282828]">
      <Tab icon={<Runner />} c="w-[93px] pl-2">Animator</Tab><span className="flex h-full w-[95px] items-center gap-1 bg-[#383838] pl-1.5"><Clock />Animation</span><Tab icon={<Stopwatch />} c="pl-2">Profiler</Tab>
      <Lock c="mr-2 ml-auto" /><Dots c="mr-3" />
    </div>
    <Hand at="left-[18px] top-[12px]" /><Hand at="left-[69px] top-[45px]" />
    <Arrow left at="left-[207px] top-[55px]" /><Arrow at="left-[249px] top-[55px]" /><Hand at="left-[225px] top-[57px]" />
  </Sprite>
);

const sizeTags = [
  ["450/102", "left-[396px] top-[567px]"], ["569/166", "left-[533px] top-[696px]"], ["337/59", "left-[1037px] top-[698px]"],
  ["373/392", "left-[384px] top-[838px]"], ["499/224", "left-[676px] top-[860px]"], ["609/278", "left-[1349px] top-[1079px]"],
  ["377/338", "left-[1390px] top-[1282px]"], ["373/193", "left-[369px] top-[1280px]"], ["358/207", "left-[448px] top-[1280px]"],
  ["362/209", "left-[369px] top-[1302px]"], ["572/141", "left-[416px] top-[1327px]"], ["509/166", "left-[951px] top-[1300px]"],
  ["332/294", "left-[338px] top-[1659px]"], ["477/327", "left-[628px] top-[1724px]"], ["369/160", "left-[518px] top-[1775px]"],
  ["302/177", "left-[305px] top-[1781px]"], ["331/89", "left-[1485px] top-[1706px]"], ["334/206", "left-[1486px] top-[1753px]"],
  ["398/168", "left-[1557px] top-[1768px]"], ["431/92", "left-[1734px] top-[2001px]"],
];

export default function App() {
  return (
    <main className="relative min-h-[2048px] w-full overflow-hidden bg-white font-['Inter',sans-serif]">
      <IconStrip />
      <SpriteA /><SpriteB /><SpriteC /><SpriteD /><SpriteE /><SpriteF /><SpriteG /><SpriteH /><SpriteI /><SpriteJ />
      <SpriteK /><SpriteL /><SpriteM /><SpriteN /><SpriteO /><SpriteP /><SpriteQ /><SpriteR /><SpriteS />
      <SpriteT1 /><SpriteT2 /><SpriteT3 /><SpriteT4 />
      {sizeTags.map(([t, at]) => <Tag key={t} at={at}>{t}</Tag>)}
    </main>
  );
}
